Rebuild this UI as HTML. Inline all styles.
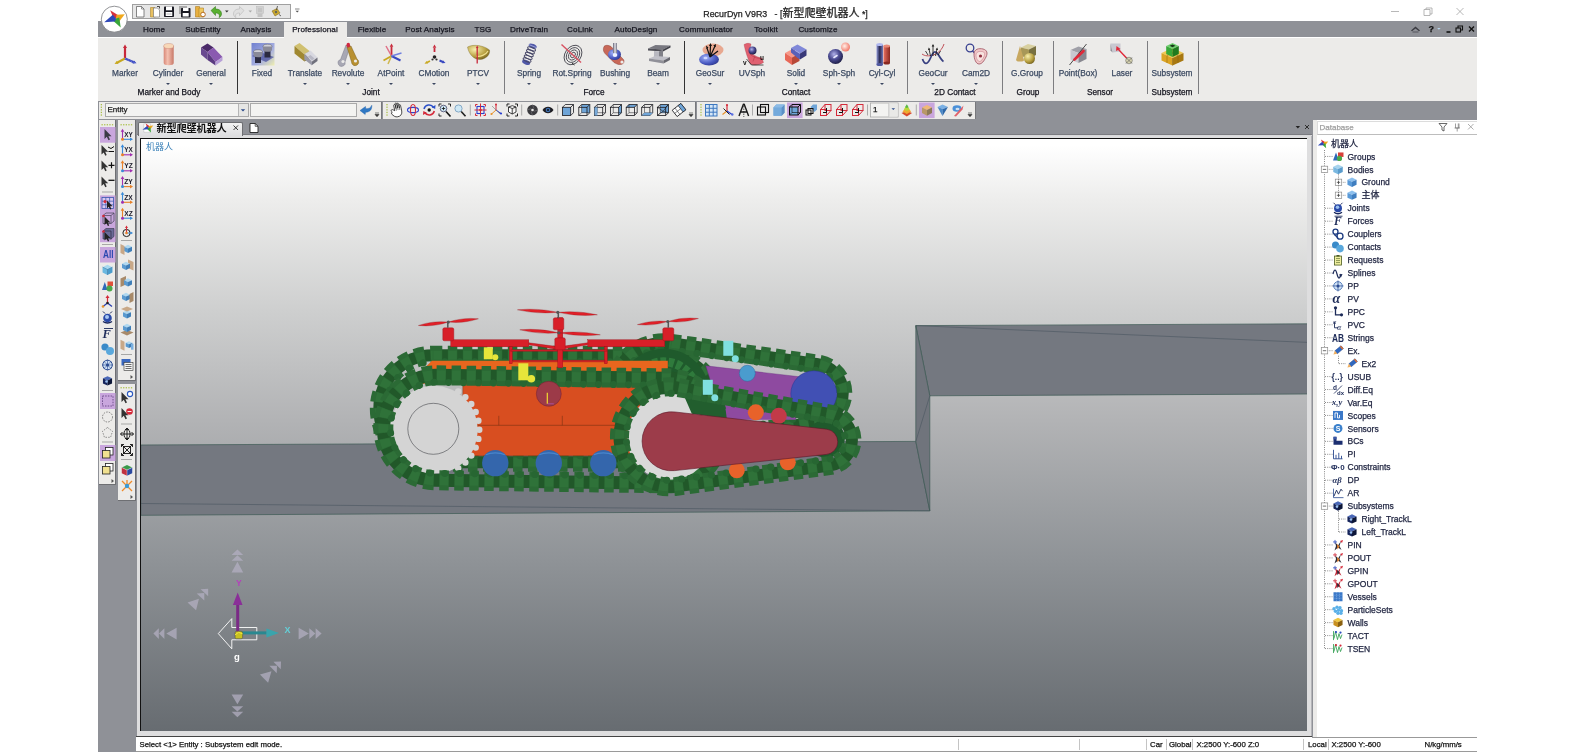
<!DOCTYPE html><html><head><meta charset="utf-8"><title>RecurDyn V9R3</title><style>
*{box-sizing:border-box;margin:0;padding:0}
html,body{width:1575px;height:756px;overflow:hidden;background:#fff}
body{position:relative;font-family:"Liberation Sans","Noto Sans CJK SC",sans-serif;font-size:8.5px;color:#1a1a2a}
.abs{position:absolute}
.t,.mtab,.rl,.gl,.tr,.sb{-webkit-text-stroke:.25px currentColor}
.t{position:absolute;white-space:nowrap;line-height:1}
.c{transform:translateX(-50%)}
#menubar{left:98px;top:21.3px;width:1379px;height:16.2px;background:#8f9197}
#ribbon{left:98px;top:37.5px;width:1379px;height:63.5px;background:#ecebe9}
#tbar{left:98px;top:101px;width:1379px;height:18px;background:#8f9197}
#work{left:98px;top:119px;width:1379px;height:619px;background:#8f9197}
.mtab{position:absolute;top:26.3px;font-size:8.1px;color:#15151f;white-space:nowrap;line-height:1;transform:translateX(-50%);letter-spacing:.1px}
.rl{position:absolute;top:69.4px;font-size:8.3px;color:#3c4a62;white-space:nowrap;line-height:1;transform:translateX(-50%)}
.gl{position:absolute;top:88.6px;font-size:8.25px;color:#15151f;white-space:nowrap;line-height:1;transform:translateX(-50%)}
.sep{position:absolute;top:41px;height:53px;width:1px;background:#7d7d80}
.dd{position:absolute;top:83px;width:0;height:0;border-left:2px solid transparent;border-right:2px solid transparent;border-top:2px solid #3a4660;transform:translateX(-50%)}
.tr{position:absolute;font-size:8.5px;color:#1f2440;white-space:nowrap;line-height:1}
.sb{position:absolute;top:740.8px;font-size:7.8px;color:#111;white-space:nowrap;line-height:1}
</style></head><body><div id="root" style="position:absolute;left:0;top:0;width:1575px;height:756px;will-change:transform">
<div class="t" style="left:703.3px;top:7.8px;font-size:8.85px;color:#222">RecurDyn V9R3&nbsp;&nbsp; - [<span style="font-size:11px">新型爬壁机器人</span> *]</div>
<svg class="abs" style="left:1385px;top:4px" width="90" height="16" viewBox="0 0 90 16"><g stroke="#9a9a9a" fill="none" stroke-width="0.7"><path d="M6 7.5h8"/><path d="M39 5.5h6v6h-6z M41 5.5v-1.5h6v6h-2"/><path d="M71.500 4l7 7M78.500 4l-7 7"/></g></svg>
<div id="menubar" class="abs"></div>
<div class="abs" style="left:283.5px;top:22.3px;width:63px;height:15.4px;background:#ecebe9"></div>
<div class="mtab" style="left:154px">Home</div>
<div class="mtab" style="left:203px">SubEntity</div>
<div class="mtab" style="left:256px">Analysis</div>
<div class="mtab" style="left:315px">Professional</div>
<div class="mtab" style="left:372px">Flexible</div>
<div class="mtab" style="left:430px">Post Analysis</div>
<div class="mtab" style="left:483px">TSG</div>
<div class="mtab" style="left:529px">DriveTrain</div>
<div class="mtab" style="left:580px">CoLink</div>
<div class="mtab" style="left:636px">AutoDesign</div>
<div class="mtab" style="left:706px">Communicator</div>
<div class="mtab" style="left:766px">Toolkit</div>
<div class="mtab" style="left:818px">Customize</div>
<div id="ribbon" class="abs"></div>
<div class="rl" style="left:125px">Marker</div>
<div class="rl" style="left:168px">Cylinder</div>
<div class="dd" style="left:168px"></div>
<div class="rl" style="left:211px">General</div>
<div class="dd" style="left:211px"></div>
<div class="rl" style="left:262px">Fixed</div>
<div class="rl" style="left:305px">Translate</div>
<div class="dd" style="left:305px"></div>
<div class="rl" style="left:348px">Revolute</div>
<div class="dd" style="left:348px"></div>
<div class="rl" style="left:391px">AtPoint</div>
<div class="dd" style="left:391px"></div>
<div class="rl" style="left:434px">CMotion</div>
<div class="dd" style="left:434px"></div>
<div class="rl" style="left:478px">PTCV</div>
<div class="dd" style="left:478px"></div>
<div class="rl" style="left:529px">Spring</div>
<div class="dd" style="left:529px"></div>
<div class="rl" style="left:572px">Rot.Spring</div>
<div class="dd" style="left:572px"></div>
<div class="rl" style="left:615px">Bushing</div>
<div class="dd" style="left:615px"></div>
<div class="rl" style="left:658px">Beam</div>
<div class="dd" style="left:658px"></div>
<div class="rl" style="left:710px">GeoSur</div>
<div class="dd" style="left:710px"></div>
<div class="rl" style="left:752px">UVSph</div>
<div class="rl" style="left:796px">Solid</div>
<div class="dd" style="left:796px"></div>
<div class="rl" style="left:839px">Sph-Sph</div>
<div class="dd" style="left:839px"></div>
<div class="rl" style="left:882px">Cyl-Cyl</div>
<div class="dd" style="left:882px"></div>
<div class="rl" style="left:933px">GeoCur</div>
<div class="dd" style="left:933px"></div>
<div class="rl" style="left:976px">Cam2D</div>
<div class="dd" style="left:976px"></div>
<div class="rl" style="left:1027px">G.Group</div>
<div class="rl" style="left:1078px">Point(Box)</div>
<div class="rl" style="left:1122px">Laser</div>
<div class="rl" style="left:1172px">Subsystem</div>
<div class="gl" style="left:169px">Marker and Body</div>
<div class="gl" style="left:371px">Joint</div>
<div class="gl" style="left:594px">Force</div>
<div class="gl" style="left:796px">Contact</div>
<div class="gl" style="left:955px">2D Contact</div>
<div class="gl" style="left:1028px">Group</div>
<div class="gl" style="left:1100px">Sensor</div>
<div class="gl" style="left:1172px">Subsystem</div>
<div class="sep" style="left:237px;background:#333;width:1.3px"></div>
<div class="sep" style="left:504px"></div>
<div class="sep" style="left:684px;background:#333;width:1.3px"></div>
<div class="sep" style="left:907px"></div>
<div class="sep" style="left:1002px"></div>
<div class="sep" style="left:1053px"></div>
<div class="sep" style="left:1147px"></div>
<div class="sep" style="left:1198px"></div>
<svg class="abs" style="left:98px;top:38px" width="1120" height="32" viewBox="98 38 1120 32">
<defs><linearGradient id="gcyl" x1="0" x2="1"><stop offset="0" stop-color="#d88878"/><stop offset=".4" stop-color="#f4c0b0"/><stop offset="1" stop-color="#c87868"/></linearGradient><linearGradient id="gfix" x1="0" y1="0" x2="1" y2="1"><stop offset="0" stop-color="#7080d0"/><stop offset=".6" stop-color="#a8b0e0"/><stop offset="1" stop-color="#f0f0b0"/></linearGradient><radialGradient id="gsph" cx=".4" cy=".35" r=".7"><stop offset="0" stop-color="#b0b0e8"/><stop offset=".5" stop-color="#4a4a90"/><stop offset="1" stop-color="#1a1a40"/></radialGradient><radialGradient id="gblue" cx=".35" cy=".35" r=".8"><stop offset="0" stop-color="#a0b0f8"/><stop offset=".6" stop-color="#4858c0"/><stop offset="1" stop-color="#283080"/></radialGradient><radialGradient id="gpink" cx=".4" cy=".4" r=".7"><stop offset="0" stop-color="#fff0e8"/><stop offset="1" stop-color="#f06858"/></radialGradient><radialGradient id="ggold" cx=".35" cy=".3" r=".8"><stop offset="0" stop-color="#f8f0b0"/><stop offset=".6" stop-color="#b8a040"/><stop offset="1" stop-color="#6a5818"/></radialGradient><linearGradient id="gsteel" x1="0" x2="1"><stop offset="0" stop-color="#606070"/><stop offset=".5" stop-color="#e0e0e8"/><stop offset="1" stop-color="#707080"/></linearGradient><linearGradient id="gredc" x1="0" x2="1"><stop offset="0" stop-color="#e87060"/><stop offset="1" stop-color="#8a2820"/></linearGradient><linearGradient id="gbluc" x1="0" x2="1"><stop offset="0" stop-color="#9098d8"/><stop offset=".5" stop-color="#282850"/><stop offset="1" stop-color="#7078b8"/></linearGradient></defs>
<path d="M125 58.500V47" stroke="#c8283a" stroke-width="2.200"/><path d="M125 44.500l-2 3.500h4z" fill="#c8283a"/>
<path d="M125 58.500L116.500 63" stroke="#c8a820" stroke-width="2"/><path d="M114.500 64l4-.3-1.800-2.800z" fill="#c8a820"/>
<path d="M125 58.500L134.500 62.500" stroke="#3848c0" stroke-width="2.200"/><path d="M136.500 63.300l-4 .2 1.500-3z" fill="#3848c0"/><path d="M125 58.500L134.500 62.500" stroke="#9aa4f0" stroke-width=".6" stroke-dasharray="1.500 1.500"/>
<path d="M163.700 46v17a5 2.200 0 0 0 10 0v-17z" fill="url(#gcyl)"/><ellipse cx="168.700" cy="46" rx="5" ry="2.500" fill="#f8d8b8" stroke="#c08070" stroke-width=".4"/>
<path d="M201 47.500l6.500-4 6 4-6 4.500z" fill="#4a2a68"/><path d="M201 47.500l6.500 4.500v8l-6.500-5.500z" fill="#6a4a90"/><path d="M207.500 52l6-4.500 9 9.500-7 5z" fill="#8a5ab0"/><path d="M207.500 52v8l8 5.500 0-3.500z" fill="#5a3a80"/><path d="M215.500 62l7-5v3.500l-7 5z" fill="#b8a0d8"/>
<rect x="251.500" y="43" width="23" height="22.500" fill="url(#gfix)"/>
<path d="M252 56l8-4 14 5-8 5z" fill="#5058a0" opacity=".8"/>
<rect x="255" y="54" width="6" height="9" fill="#2a2a40"/><ellipse cx="258" cy="52" rx="4.500" ry="2.300" fill="#d0d0d8" stroke="#444" stroke-width=".4"/><path d="M253.5 52v3a4.500 2.300 0 0 0 9 0v-3" fill="#8a8a98"/>
<rect x="264.5" y="48.5" width="6" height="9" fill="#2a2a40"/><ellipse cx="267.5" cy="46.5" rx="4.500" ry="2.300" fill="#d0d0d8" stroke="#444" stroke-width=".4"/><path d="M263 46.5v3a4.500 2.300 0 0 0 9 0v-3" fill="#8a8a98"/>
<path d="M294.500 46l5-3 10 8-5 3.500z" fill="#d0c070"/><path d="M294.500 46l10 8.500v7l-10-8z" fill="#a08830"/><path d="M304.500 54.500l5-3.500v7l-5 3.500z" fill="#786420"/>
<path d="M304.500 54l6-3.500 7 7-5.500 4z" fill="#d8d8e0"/><path d="M304.500 54l7.500 7.500v4l-7.500-6z" fill="#9a9aa8"/><path d="M312 61.500l5.500-4v3.500l-5.500 4z" fill="#70707c"/><path d="M308 56.500l4 4 2.500-2-4-3.500z" fill="#b8b8c4"/>
<path d="M346 45l4 1.500-5 15.500a3.500 3.500 0 1 1-4.500-2.500z" fill="#a8a8b4" stroke="#66667a" stroke-width=".4"/><circle cx="343" cy="61.500" r="1.600" fill="#ecebe9"/>
<path d="M347 47l4-1 6 13a3.600 3.600 0 1 1-5.500 3z" fill="#b89030" stroke="#6a5010" stroke-width=".4"/><circle cx="355.500" cy="61" r="1.600" fill="#ecebe9"/>
<ellipse cx="348.300" cy="45.200" rx="1.800" ry="2.400" fill="#d02840"/>
<path d="M391.500 56v-9.500" stroke="#c8283a" stroke-width="1.800"/><path d="M391.500 43.500l-1.800 3.300h3.600z" fill="#c8283a"/>
<path d="M391.500 56l-5.500-10" stroke="#e07088" stroke-width="1.500"/>
<path d="M391.500 56l-8 4.500" stroke="#c8a820" stroke-width="1.800"/><path d="M391.500 56l-3.500 8" stroke="#d0b850" stroke-width="1.500"/>
<path d="M391.500 56l9 4.500" stroke="#3848c0" stroke-width="2"/><path d="M391.500 56l10-3" stroke="#7080e0" stroke-width="1.400"/>
<path d="M434.500 52v-4" stroke="#c8283a" stroke-width="1.800"/><path d="M434.500 44.500l-1.800 3.300h3.600z" fill="#c8283a"/>
<circle cx="434.500" cy="57" r="1.800" fill="#222"/><circle cx="432.500" cy="59.500" r="1.100" fill="#333"/><circle cx="436.500" cy="59.500" r="1.100" fill="#333"/>
<path d="M430 61l-3 1.500" stroke="#c8a820" stroke-width="1.800"/><path d="M424.500 63.800l3.600-.2-1.500-2.600z" fill="#c8a820"/>
<path d="M439.500 60.500l3.500 1.500" stroke="#3848c0" stroke-width="2"/><path d="M445.500 63l-3.600.2 1.300-2.800z" fill="#3848c0"/>
<path d="M467.500 47c5-3 16-2 22 3 1 5-4 9-9 9.500-7 .5-12-6-13-12.500z" fill="url(#ggold)" stroke="#6a5818" stroke-width=".3"/><path d="M476 56c4 1 10-1 12-5" fill="none" stroke="#f0e090" stroke-width="1.200"/>
<path d="M477.200 47.500V63.500" stroke="#c8283a" stroke-width="1.300"/><path d="M477.200 45.500l-1.300 2.600h2.600z" fill="#c8283a"/>
<g transform="rotate(22 529.500 54)"><ellipse cx="529.500" cy="45.500" rx="4.200" ry="2.200" fill="#5058a8"/><ellipse cx="529.500" cy="63" rx="4.200" ry="2.200" fill="#5058a8"/>
<ellipse cx="529.500" cy="48.5" rx="4.200" ry="1.500" fill="none" stroke="#484868" stroke-width="1"/>
<ellipse cx="529.500" cy="51.5" rx="4.200" ry="1.500" fill="none" stroke="#484868" stroke-width="1"/>
<ellipse cx="529.500" cy="54.5" rx="4.200" ry="1.500" fill="none" stroke="#484868" stroke-width="1"/>
<ellipse cx="529.500" cy="57.5" rx="4.200" ry="1.500" fill="none" stroke="#484868" stroke-width="1"/>
<ellipse cx="529.500" cy="60.5" rx="4.200" ry="1.500" fill="none" stroke="#484868" stroke-width="1"/>
<path d="M525.500 45.500h8" stroke="#c0c8f0" stroke-width=".6"/></g>
<g fill="none" stroke="#3a3a44" stroke-width=".8" transform="rotate(35 573 55)">
<ellipse cx="573" cy="55" rx="2" ry="3"/>
<ellipse cx="573" cy="55" rx="4" ry="5.5"/>
<ellipse cx="573" cy="55" rx="6" ry="8"/>
<ellipse cx="573" cy="55" rx="8" ry="10.5"/>
</g><path d="M561.500 44.500L581 62.500" stroke="#d85060" stroke-width="1.400"/><path d="M572 63l2.500 2" stroke="#333" stroke-width="1"/>
<path d="M604 46.500c2-2 5-1 7 0l12 12.500c2 2 1 5-2 5.500-3 .5-5-1-7-2l-9-9c-2-2-2-5-1-7z" fill="#c86858" stroke="#7a3028" stroke-width=".4"/>
<ellipse cx="614.500" cy="54.500" rx="6.500" ry="5.500" fill="url(#gblue)"/><ellipse cx="615" cy="55" rx="2.300" ry="2" fill="#f0f4ff"/>
<rect x="613" y="43" width="4" height="10" fill="url(#gsteel)"/><circle cx="622" cy="62" r="1.600" fill="#ecebe9"/>
<path d="M648 48.500l7.500-3.500 15 .5-7.500 4z" fill="#787880"/><path d="M648 48.500l15 1v2l-15-1z" fill="#505058"/><path d="M663 49.500l7.500-4v2l-7.500 4z" fill="#404048"/>
<path d="M654 51v8l5 .5v-8z" fill="#b8b8c0"/><path d="M659 51.500l4-2v8l-4 2z" fill="#808088"/>
<path d="M649 58.500l6-2.500 15 1-6.500 3.500z" fill="#c0c0c8"/><path d="M649 58.500l14.500 2v3l-14.500-2.500z" fill="#909098"/><path d="M663.500 60.500l6.500-3.500v3l-6.500 3.500z" fill="#686870"/>
<ellipse cx="713" cy="50" rx="10.500" ry="6.500" fill="#e8a890"/><ellipse cx="709" cy="59.500" rx="10" ry="6" fill="url(#gblue)"/><ellipse cx="705.500" cy="58" rx="2" ry="1.200" fill="#d0d8ff"/>
<g stroke="#111" stroke-width="1.200" fill="none"><path d="M710 57l-3-9M710 57l.5-12M710 57l5-11M710 57l8-6"/></g><path d="M706 45.500l2.500 2-2 1.500zM710.500 43l1.500 3h-3zM716 44l-.3 3.300-2.500-1.800z" fill="#111"/>
<path d="M744 44.500c3-1.500 5-1.500 7-.5l-1 5c2 6 6 8 12 9l1.500 4.500c-5 3-10 3-13 1.500-3-6-5-12-6.500-19.500z" fill="#e06070" stroke="#a02838" stroke-width=".3"/><path d="M750 54c3 3 6 4 10 4.500M753 61.500l2-6" stroke="#a02838" stroke-width=".4" fill="none"/>
<circle cx="752.500" cy="50.500" r="4" fill="url(#gsph)"/>
<text x="743" y="64.500" font-size="6.500" font-weight="bold" fill="#111" font-family="Liberation Sans,sans-serif">v</text><text x="760" y="60" font-size="6.500" font-weight="bold" fill="#111" font-family="Liberation Sans,sans-serif">u</text><path d="M746.500 59l5 6h12" stroke="#111" stroke-width=".7" fill="none"/>
<path d="M785 53l7.500-4 7 4.500-7.500 4z" fill="#f89888"/><path d="M785 53l7 4.500v7.500l-7-5z" fill="#e86858"/><path d="M792 57.500l7.500-4v7.500l-7.500 4z" fill="#b84838"/>
<path d="M791 48l6.500-3.500 9 5-6.500 4z" fill="#8088d8"/><path d="M800 53.500l6.500-4v6l-6.500 4z" fill="#383878"/><path d="M791 48l9 5.500v6l-3-2-6-5z" fill="#5860b8"/><path d="M795 50.500l5 3" stroke="#c0c8ff" stroke-width=".5"/>
<circle cx="835.500" cy="56.500" r="7.500" fill="url(#gsph)"/><circle cx="845.500" cy="47" r="4.500" fill="url(#gpink)"/><path d="M834 57.500l3-2" stroke="#e8e8ff" stroke-width="1.600" stroke-linecap="round"/>
<rect x="883.500" y="46" width="6.500" height="17" fill="url(#gredc)"/><ellipse cx="886.700" cy="46" rx="3.250" ry="1.500" fill="#e88878"/><ellipse cx="886.700" cy="63" rx="3.250" ry="1.500" fill="#8a2820"/>
<rect x="876.500" y="44.500" width="6.500" height="20" fill="url(#gbluc)"/><ellipse cx="879.700" cy="44.500" rx="3.250" ry="1.500" fill="#b0b8f0"/><ellipse cx="879.700" cy="64.500" rx="3.250" ry="1.500" fill="#5058a0"/>
<path d="M922 54c5 4 18 2 22-10" fill="none" stroke="#c05058" stroke-width="1"/><path d="M922.500 59c2 6 5 6 8-1s5-8 8-3 4 6 5 6.500" fill="none" stroke="#384080" stroke-width="1.800"/>
<g stroke="#111" stroke-width=".8"><path d="M933 56v-10M930.500 56l-1.500-7M935.500 56l1.500-7M928 55l-2.500-4M938 55l2.500-4"/></g><path d="M933 44l1.300 2.500h-2.600zM928.800 47.500l1.500 2-2.300.5zM937.200 47.500l.8 2.500-2.300-.5z" fill="#111"/>
<circle cx="970" cy="48" r="3.800" fill="none" stroke="#384090" stroke-width="1.300"/><path d="M972.500 51l4 4" stroke="#384090" stroke-width="1.300"/>
<path d="M974 54c0-5 5-6 9-5 4 1 5 4 3 8s-4 7-7 7-5-5-5-10z" fill="#f0c8c8" stroke="#a05060" stroke-width=".8"/><path d="M976 55c0-3 3-4 6-3.500s3 2.500 2 5-3 5-4.500 5-3.500-3-3.500-6.500z" fill="#f8e4e0" stroke="#c07080" stroke-width=".5"/><circle cx="980.500" cy="56" r="1.600" fill="#903040"/>
<path d="M1021 47.500l7-3.500 8 2-7 3.500z" fill="#d8d0a0"/><path d="M1021 47.500l8 2v9l-8-2.500z" fill="#a89858"/><path d="M1029 49.500l7-3.500v9l-7 3.500z" fill="#787040"/>
<path d="M1016 60l4-14 4 14a4 1.500 0 0 1-8 0z" fill="#c8a860"/><circle cx="1029.500" cy="58.500" r="5.500" fill="url(#ggold)"/>
<path d="M1070.500 50l8-3.500 8 2.500-8 4z" fill="#a0a0a8"/><path d="M1070.500 50l8 3v10l-8-3.500z" fill="#c8c8d0"/><path d="M1078.500 53l8-4v10l-8 4z" fill="#888890"/>
<path d="M1069.500 65l17-21" stroke="#222" stroke-width=".8"/><path d="M1074.500 59.500l9-8.500" stroke="#e02838" stroke-width="2.600" stroke-linecap="round"/>
<path d="M1110.500 43.500h10v8l-8 1z" fill="#c8c8d0"/><path d="M1110.500 43.500l2 9-2-2z" fill="#909098"/><path d="M1116.500 46l-0.500 5 4.500-2z" fill="#e02838"/><path d="M1118 49l9 9.500" stroke="#e02838" stroke-width="1.400"/>
<circle cx="1129" cy="60.500" r="3.300" fill="#d8d4b0" stroke="#555" stroke-width=".5"/><path d="M1126 57.500l6 6M1132 57.500l-6 6" stroke="#555" stroke-width=".6"/>
<path d="M1172.500 48L1183.500 53L1172.500 58L1161.500 53z" fill="#f0c850"/><path d="M1161.500 53L1172.500 58V65.500L1161.500 60.500z" fill="#dca424"/><path d="M1183.500 53L1172.500 58V65.500L1183.500 60.500z" fill="#a87810"/>
<path d="M1167 50.500L1178 55.500M1178 50.500L1167 55.500M1167 55.500V63M1178 55.500V63M1172.500 58V65.500" stroke="#8a6008" stroke-width=".5" fill="none"/>
<path d="M1172.500 43L1178.800 46L1172.500 49L1166.200 46z" fill="#70d070"/><path d="M1166.200 46L1172.500 49V57L1166.200 54z" fill="#38a838"/><path d="M1178.800 46L1172.500 49V57L1178.800 54z" fill="#1f7a1f"/>
<path d="M1169.500 45.800l3 1.400 3-1.400-3-1.400z" fill="#183818"/>
</svg>
<div class="abs" style="left:132.300px;top:4.200px;width:158.300px;height:14.800px;background:#e6e6e6;border:1px solid #a0a0a0"></div>
<svg class="abs" style="left:98px;top:0" width="210" height="36" viewBox="98 0 210 36">
<circle cx="114.300" cy="19.200" r="13" fill="#fff" stroke="#77787c" stroke-width=".8"/>
<path d="M110.200 10.200L118.200 15.300L116 18.500L112.800 16.500z" fill="#d8313a"/><path d="M124.800 14.300L119 21.800L116 18.500L116.500 14.800z" fill="#f0a81c"/><path d="M120.700 27.600L112.500 20.200L116 18.500L119.300 17.500z" fill="#3aa63a"/><path d="M104.200 22.200L112.800 14.800L116 18.500L115 21.500z" fill="#2f48b8"/>
<path d="M136.500 6.500h5l2.500 2.500v8h-7.500z" fill="#fff" stroke="#555" stroke-width=".7"/><path d="M141.500 6.500v2.500h2.500" fill="none" stroke="#555" stroke-width=".6"/>
<path d="M150.500 7.500h4l1 1v8.500h-5z" fill="#e8c060" stroke="#a07818" stroke-width=".5"/><path d="M153.500 8h4l2 2v7h-6z" fill="#fff" stroke="#666" stroke-width=".6"/><path d="M157 6.500h2.500v2" stroke="#222" stroke-width=".8" fill="none"/>
<rect x="164" y="6.500" width="10" height="10.500" rx=".8" fill="#1a1a22"/><rect x="166" y="6.500" width="6" height="3.800" fill="#fff"/><rect x="165.700" y="12" width="6.600" height="4" fill="#fff"/><path d="M166.500 14h5" stroke="#888" stroke-width=".6"/>
<rect x="179" y="6" width="8" height="8" fill="#aaa"/><rect x="181" y="8" width="9.500" height="9.500" rx=".8" fill="#1a1a22"/><rect x="183" y="8" width="5.500" height="3" fill="#fff"/><rect x="182.700" y="13" width="6" height="3.500" fill="#fff"/>
<path d="M195.500 6.500h4v10.500h-4z" fill="#e8b040" stroke="#a07010" stroke-width=".5"/><path d="M199 8h4.500v9h-4.500z" fill="#f0c860" stroke="#a07010" stroke-width=".5"/><circle cx="203" cy="14.500" r="2.300" fill="#fff" stroke="#b06010" stroke-width=".9"/>
<path d="M211 10.500l4.500-4v2.500c4 0 6 2 6 5 0 1.500-1 3-2.500 3.500 1-2 .5-4.500-3.500-4.500v2.500z" fill="#58b030" stroke="#2a7010" stroke-width=".5"/>
<path d="M225 10.500h3.600l-1.800 2z" fill="#333"/>
<path d="M244 10.500l-4.500-4v2.500c-4 0-6 2-6 5 0 1.500 1 3 2.500 3.500-1-2-.5-4.500 3.500-4.500v2.500z" fill="#e0e0e0" stroke="#b8b8b8" stroke-width=".6"/>
<path d="M248.500 10.500h3.600l-1.800 2z" fill="#aaa"/>
<rect x="256.500" y="6.500" width="7" height="7" fill="#d0d0d0" stroke="#bbb" stroke-width=".5"/><path d="M257.500 13.500h5v3.500h-5z" fill="#c4c4c4"/><path d="M258 9h4M258 11h4" stroke="#aaa" stroke-width=".6"/>
<path d="M272 11l5-2.500 3 4.500-5 3z" fill="#c8a830" stroke="#806010" stroke-width=".5"/><path d="M277.500 6l-1 4M279 14.500l2 1.500" stroke="#444" stroke-width=".8"/><circle cx="276" cy="12" r="1.200" fill="#665"/>
<path d="M295 9h4.500" stroke="#555" stroke-width=".7"/><path d="M295.500 10.800h3.500l-1.750 1.700z" fill="#555"/>
</svg>
<svg class="abs" style="left:1405px;top:22px" width="72" height="15" viewBox="1405 22 72 15">
<path d="M1411 30.500l4.500-4 4.500 4-1 .8-3.500-2.800-3.500 2.800z" fill="#3a3a40"/><path d="M1412.500 31.500h6v1h-6z" fill="#55555c"/>
<path d="M1437.200 28h3.400l-1.700 1.800z" fill="#b8d8f0"/>
<path d="M1446.500 32h4" stroke="#111" stroke-width="1.600"/>
<g fill="none" stroke="#111" stroke-width="1.100"><rect x="1456" y="28" width="4.500" height="4"/><path d="M1458 28v-2h4.500v4h-2"/></g>
<path d="M1469 26.500l5 5M1474 26.500l-5 5" stroke="#111" stroke-width="1.400"/>
</svg>
<div class="t" style="left:1428.500px;top:24.500px;font-size:9px;font-weight:bold;color:#111">?</div>
<div id="tbar" class="abs"></div>
<div class="abs" style="left:98.5px;top:101.5px;width:283.5px;height:17.3px;background:#ecebe9;border-right:1px solid #77787c"></div>
<div class="abs" style="left:383.3px;top:101.5px;width:312.5px;height:17.3px;background:#ecebe9;border-right:1px solid #77787c"></div>
<div class="abs" style="left:697.0px;top:101.5px;width:278.8px;height:17.3px;background:#ecebe9;border-right:1px solid #77787c"></div>
<div class="abs" style="left:98px;top:100.6px;width:1379px;height:1px;background:#8f9197"></div>
<div class="abs" style="left:104.5px;top:102.8px;width:144px;height:14px;background:#f3f3f1;border:1px solid #a9a9a9"></div>
<div class="abs" style="left:238px;top:103.5px;width:10px;height:12.6px;background:#e6e6e4;border-left:1px solid #b5b5b5"></div>
<div class="t" style="left:107.5px;top:105.5px;font-size:8px;color:#1a1a1a">Entity</div>
<div class="abs" style="left:249.5px;top:102.8px;width:107px;height:14px;background:#f3f3f1;border:1px solid #a9a9a9"></div>
<svg class="abs" style="left:98px;top:101px" width="1379" height="18" viewBox="98 101 1379 18">
<path d="M101.3 104v12" stroke="#9ab520" stroke-width="1" stroke-dasharray="1.3 1.3" fill="none"/>
<path d="M240.8 109.3h4.4l-2.2 2.2z" fill="#2b4a8a"/>
<path d="M360 110.5l5.5-4 .3 2.2c3 .2 5-1 6-3.500 .3 4.500-2 7-6.300 7l-.3 2.300z" fill="#2f78c4" stroke="#1d5ea8" stroke-width=".4"/>
<path d="M375 113h4M375 114.5h4l-2 2.2z" stroke="#333" stroke-width="0.6" fill="#333"/>
<path d="M387 104v12" stroke="#9ab520" stroke-width="1" stroke-dasharray="1.3 1.3" fill="none"/>
<g transform="rotate(-12 397 110)"><path d="M391.800 110.800c-1.400-1.500-.2-3 1.400-1.800l1.500 1.300v-5.300c0-1.200 1.700-1.200 1.700 0v3.500-4.700c0-1.200 1.700-1.200 1.700 0v4.500-3.900c0-1.200 1.700-1.200 1.700 0v4.200-2.500c0-1.100 1.600-1.100 1.600 0v5.900c0 3.200-2.200 4.800-5 4.800s-3.900-1.700-5.600-4.200z" fill="#fff" stroke="#222" stroke-width=".75" stroke-linejoin="round"/><path d="M396.400 108.500v2M398.100 108.300v2M399.800 108.600v2" stroke="#222" stroke-width=".5"/></g>
<g fill="none" stroke-width="1.100"><ellipse cx="413" cy="110" rx="5.500" ry="2.600" stroke="#2a3fd0"/><ellipse cx="413" cy="110" rx="2.500" ry="5.500" stroke="#d42a3a"/></g>
<g fill="none" stroke-width="1.500"><path d="M424 109a5.200 5.200 0 0 1 9.500-1.500" stroke="#2a4fc8"/><path d="M434.300 111a5.200 5.200 0 0 1 -9.500 1.500" stroke="#d42a3a"/></g><path d="M435.500 105l-.3 4-3.500-1.800z" fill="#2a4fc8"/><path d="M423 115l.3-4 3.500 1.800z" fill="#d42a3a"/><circle cx="429.200" cy="110" r="1.700" fill="#111"/>
<g fill="none" stroke="#111" stroke-width=".9"><path d="M439 106.500v-2.500h2.500M448 104h2.500v2.500M439 113.500v2.500h2.500"/></g><circle cx="443.500" cy="108.500" r="3.300" fill="#cfe8f5" stroke="#446" stroke-width=".8"/><path d="M446 111.500l4.500 5" stroke="#111" stroke-width="1.600"/><path d="M443.500 106.800v3.400M441.800 108.500h3.400" stroke="#111" stroke-width=".8"/>
<circle cx="458.500" cy="108.500" r="3.600" fill="#cfe8f5" stroke="#7aa0c0" stroke-width=".9"/><path d="M461.200 111.500l4.300 4.700" stroke="#222" stroke-width="1.600"/>
<path d="M470.3 104.5v11" stroke="#9a9a9a" stroke-width="0.8"/>
<g fill="none" stroke="#d42a3a" stroke-width="1"><path d="M475.500 106.500v-2h2M483.500 104.500h2v2M475.500 113.500v2h2M485.500 113.500v2h-2"/></g><rect x="477" y="106.500" width="7" height="7" fill="none" stroke="#2a3fd0" stroke-width="1.100"/><path d="M480.500 103.500v13M474.500 110h12" stroke="#d42a3a" stroke-width="1"/><circle cx="480.500" cy="110" r="1.300" fill="#d42a3a"/>
<g stroke-width="1"><path d="M496 110v-5.500" stroke="#d42a3a"/><path d="M496 110l-4.500 4" stroke="#e8922a"/><path d="M496 110l5 3.500" stroke="#2a3fd0"/><path d="M492 106l8 8" stroke="#777" stroke-width=".6"/></g><circle cx="496" cy="104.500" r="1" fill="#d42a3a"/><circle cx="491.500" cy="114" r="1.100" fill="#e8922a"/><circle cx="501" cy="113.500" r="1.100" fill="#2a3fd0"/>
<g fill="none" stroke="#111" stroke-width=".9"><path d="M507 106.500v-2.500h2.500M515 104h2.500v2.500M507 113.500v2.500h2.500M517.500 113.500v2.500h-2.500"/><path d="M508.500 107l3.700 1.500 3.800-1.500-3.700-1.300zM508.500 107v5l3.700 2v-5.500M516 107v5l-3.800 2" stroke-width=".8" fill="#fff"/></g>
<path d="M521.7 104.5v11" stroke="#9a9a9a" stroke-width="0.8"/>
<circle cx="532.500" cy="110" r="5.300" fill="#3b3b3f"/><circle cx="532.500" cy="110" r="1.300" fill="#e8e8e8"/><g stroke="#77777c" stroke-width=".6"><path d="M532.500 104.700l1.500 4M537.800 110l-4 1.400M532.500 115.300l-1.500-4M527.200 110l4-1.400"/></g>
<path d="M542.500 110c3-4.300 8-4.300 11 0-3 4.300-8 4.300-11 0z" fill="#1d1d22"/><circle cx="548" cy="110" r="2.300" fill="#3d6fb0"/><circle cx="548" cy="110" r="1" fill="#111"/>
<path d="M557.7 104.5v11" stroke="#9a9a9a" stroke-width="0.8"/>
<rect x="562.5" y="107.3" width="8.2" height="8.2" fill="#6fa5d8"/>
<g fill="none" stroke="#1b1b20" stroke-width=".8"><rect x="562.5" y="107.3" width="8.2" height="8.2"/><path d="M562.5 107.3l2.8 -2.8h8.2v8.2l-2.8 2.8M570.7 107.3l2.8 -2.8"/>
</g>
<rect x="581.6" y="104.7" width="8.2" height="8.2" fill="#6fa5d8"/>
<g fill="none" stroke="#1b1b20" stroke-width=".8"><rect x="578.8" y="107.3" width="8.2" height="8.2"/><path d="M578.8 107.3l2.8 -2.8h8.2v8.2l-2.8 2.8M587 107.3l2.8 -2.8"/>
<path d="M581.6 104.5v8.2h8.2M581.6 112.7l-2.8 2.8" stroke-width=".5"/>
</g>
<g fill="none" stroke="#1b1b20" stroke-width=".8"><rect x="594.5" y="107.3" width="8.2" height="8.2"/><path d="M594.5 107.3l2.8 -2.8h8.2v8.2l-2.8 2.8M602.7 107.3l2.8 -2.8"/>
<path d="M597.3 104.5v8.2h8.2M597.3 112.7l-2.8 2.8" stroke-width=".5"/>
</g>
<rect x="594.500" y="107.300" width="3" height="8.200" fill="#6fa5d8" opacity=".9"/>
<path d="M618.7 107.3l2.8 -2.8v8.2l-2.8 2.8z" fill="#6fa5d8"/>
<g fill="none" stroke="#1b1b20" stroke-width=".8"><rect x="610.5" y="107.3" width="8.2" height="8.2"/><path d="M610.5 107.3l2.8 -2.8h8.2v8.2l-2.8 2.8M618.7 107.3l2.8 -2.8"/>
<path d="M613.3 104.5v8.2h8.2M613.3 112.7l-2.8 2.8" stroke-width=".5"/>
</g>
<path d="M626.2 107.3l2.8 -2.8h8.2l-2.8 2.8z" fill="#6fa5d8"/>
<g fill="none" stroke="#1b1b20" stroke-width=".8"><rect x="626.2" y="107.3" width="8.2" height="8.2"/><path d="M626.2 107.3l2.8 -2.8h8.2v8.2l-2.8 2.8M634.4 107.3l2.8 -2.8"/>
<path d="M629 104.5v8.2h8.2M629 112.7l-2.8 2.8" stroke-width=".5"/>
</g>
<g fill="none" stroke="#1b1b20" stroke-width=".8"><rect x="641.7" y="107.3" width="8.2" height="8.2"/><path d="M641.7 107.3l2.8 -2.8h8.2v8.2l-2.8 2.8M649.9 107.3l2.8 -2.8"/>
<path d="M644.5 104.5v8.2h8.2M644.5 112.7l-2.8 2.8" stroke-width=".5"/>
</g>
<path d="M641.700 115.500l2.800-2.800h8.200l-2.800 2.800z" fill="#6fa5d8"/>
<rect x="660.3" y="104.7" width="8.2" height="8.2" fill="#6fa5d8"/>
<g fill="none" stroke="#1b1b20" stroke-width=".8"><rect x="657.5" y="107.3" width="8.2" height="8.2"/><path d="M657.5 107.3l2.8 -2.8h8.2v8.2l-2.8 2.8M665.7 107.3l2.8 -2.8"/>
<path d="M660.3 104.5v8.2h8.2M660.3 112.7l-2.8 2.8" stroke-width=".5"/>
</g>
<path d="M657.500 107.300l5.500 4 5.500-6.800M657.500 115.500l5.500-4.200 5.500 1.400" stroke="#1b1b20" stroke-width=".6" fill="none"/>
<g transform="rotate(-38 679 110)"><rect x="673.500" y="106" width="11" height="8" fill="#fff" stroke="#1b1b20" stroke-width=".8"/><rect x="681" y="106" width="3.500" height="8" fill="#6fa5d8" stroke="#1b1b20" stroke-width=".6"/><path d="M677 106v8M673.500 110h7.500" stroke="#1b1b20" stroke-width=".5"/></g>
<path d="M689 113h4M689 114.5h4l-2 2.2z" stroke="#333" stroke-width="0.6" fill="#333"/>
<path d="M701 104v12" stroke="#9ab520" stroke-width="1" stroke-dasharray="1.3 1.3" fill="none"/>
<rect x="705.500" y="104.500" width="11.500" height="11.500" fill="#d4e6f7" stroke="#3d78c0" stroke-width="1"/><path d="M709.300 104.500v11.500M713.200 104.500v11.500M705.500 108.300h11.500M705.500 112.200h11.500" stroke="#3d78c0" stroke-width="1"/>
<g stroke-width="1.200"><path d="M727 111v-6" stroke="#d42a3a"/><path d="M727 111l-4.500 3.500" stroke="#e8922a"/><path d="M727 111l5 3.500" stroke="#2a3fd0"/><path d="M723.500 108.500l6 6" stroke="#222" stroke-width="1"/></g><circle cx="727" cy="105" r="1.100" fill="#d42a3a"/><circle cx="732.300" cy="114.500" r="1.200" fill="#5a6fe0"/>
<path d="M739 116l4.300-11.500h1l4.300 11.500M740.800 112h6" stroke="#1a1a1a" stroke-width="1.400" fill="none"/><path d="M743.800 103.500v13.500" stroke="#1a1a1a" stroke-width=".7" stroke-dasharray="1.500 1"/>
<path d="M752.5 104.5v11" stroke="#9a9a9a" stroke-width="0.8"/>
<g fill="none" stroke="#111" stroke-width="1.100"><rect x="757.500" y="107" width="8" height="8"/><rect x="760.500" y="104.500" width="8" height="8"/></g>
<path d="M773.500 107.500l2.800-3h8.200v8.200l-2.800 3h-8.200z" fill="#6fa5d8"/><path d="M773.500 107.500h8.200v8.200h-8.200z" fill="#74aadc"/><path d="M781.700 107.500l2.800-3v8.200l-2.800 3z" fill="#5b90c6"/><path d="M773.500 107.500l2.800-3h8.200l-2.800 3z" fill="#8cbbe6"/>
<rect x="787" y="102.500" width="15.600" height="15.600" fill="#c9a6dd"/>
<rect x="789.500" y="107" width="8.500" height="8" fill="#6fa5d8"/><g fill="none" stroke="#111" stroke-width="1"><rect x="789.500" y="107" width="8.500" height="8"/><path d="M789.500 107l2.500-2.500h8.500v8l-2.500 2.500M798 107l2.500-2.500"/><path d="M792 104.500v8h8.500M792 112.500l-2.500 2.500" stroke-width=".6"/></g>
<path d="M810.500 107l2.500-2.500h4v5l-2.500 2.500z" fill="#6fa5d8"/><g fill="none" stroke="#111" stroke-width="1"><rect x="806" y="110" width="5" height="5"/><rect x="808" y="108.500" width="5" height="5"/></g>
<g fill="none" stroke="#d42a3a" stroke-width="1"><rect x="820.5" y="109.500" width="6" height="6"/><rect x="825" y="104.500" width="6" height="6"/><path d="M820.5 109.500l4.500-5M826.5 115.500l4.500-5"/></g>
<path d="M826.5 108v4.500h-3.500" stroke="#111" stroke-width="1" fill="none"/>
<g fill="none" stroke="#d42a3a" stroke-width="1"><rect x="836.5" y="109.500" width="6" height="6"/><rect x="841" y="104.500" width="6" height="6"/><path d="M836.5 109.500l4.500-5M842.5 115.500l4.500-5"/></g>
<path d="M842.5 108v4.500h-3.500" stroke="#111" stroke-width="1" fill="none"/>
<g fill="none" stroke="#d42a3a" stroke-width="1"><rect x="852.5" y="109.500" width="6" height="6"/><rect x="857" y="104.500" width="6" height="6"/><path d="M852.5 109.500l4.500-5M858.5 115.500l4.500-5"/></g>
<path d="M858.5 108v4.500h-3.500" stroke="#111" stroke-width="1" fill="none"/>
<path d="M867.5 104.5v11" stroke="#9a9a9a" stroke-width="0.8"/>
<rect x="870.600" y="103" width="27.500" height="14" fill="#f3f3f1" stroke="#a9a9a9" stroke-width=".8"/><rect x="889" y="103.400" width="8.800" height="13.200" fill="#e9e9e7"/><path d="M888.800 103.400v13.200" stroke="#b5b5b5" stroke-width=".7"/>
<path d="M891.5 108.3h3.6l-1.8 1.8z" fill="#2b4a8a"/>
<path d="M901.500 113l5.300 3.500 5.300-3.500-5.300-2z" fill="#d94a2a"/><path d="M902.500 111.500l4.300 2.500 4.300-2.500-4.300-5z" fill="#f0a830"/><path d="M903.800 109.500l3 1.500 3-1.500-3-4.500z" fill="#b8d838"/><path d="M905 107.200l1.800.8 1.800-.8-1.800-3z" fill="#58b848"/>
<path d="M916.3 104.5v11" stroke="#9a9a9a" stroke-width="0.8"/>
<rect x="919" y="102.500" width="15.600" height="15.600" fill="#c9a6dd"/>
<path d="M922 107.500l5-2.500 5 2.500-5 2.500z" fill="#f0b878"/><path d="M922 107.500v5.500l5 2.800v-5.800z" fill="#b89868"/><path d="M932 107.500v5.500l-5 2.800v-5.800z" fill="#8e7a58"/>
<path d="M937.500 107l5-2.500 5.500 2.500-5 2z" fill="#7ab0e4"/><path d="M937.500 107l5.500 2 -0.500 7z" fill="#4a88c8"/><path d="M948 107l-5 2-.5 7z" fill="#2f68a8"/>
<ellipse cx="957" cy="108.500" rx="4.500" ry="3.300" fill="#4a90d8"/><ellipse cx="957.500" cy="109" rx="2" ry="1.300" fill="#cfe0f0"/><path d="M954 116l9.500-10.500-1 4-6.500 7z" fill="#e0606a"/>
<path d="M968 113h4M968 114.5h4l-2 2.2z" stroke="#333" stroke-width="0.6" fill="#333"/>
</svg>
<div class="t" style="left:873px;top:105.500px;font-size:8px;color:#111">1</div>
<div id="work" class="abs"></div>
<div class="abs" style="left:98px;top:737px;width:38px;height:15px;background:#8f9197"></div>
<div class="abs" style="left:99px;top:120px;width:17px;height:365px;background:#ecebe9;border-right:1px solid #6e6f73;border-bottom:1px solid #6e6f73"></div>
<div class="abs" style="left:118px;top:120px;width:18px;height:261px;background:#ecebe9;border-right:1px solid #6e6f73;border-bottom:1px solid #6e6f73"></div>
<div class="abs" style="left:118px;top:384px;width:18px;height:117px;background:#ecebe9;border-right:1px solid #6e6f73;border-bottom:1px solid #6e6f73"></div>
<svg class="abs" style="left:98px;top:119px" width="40" height="390" viewBox="98 119 40 390">
<path d="M101.5 124.8h12" stroke="#9ab520" stroke-width="1" stroke-dasharray="1.300 1.300"/>
<rect x="100" y="127" width="15.500" height="15.700" fill="#c9a6dd"/>
<path d="M104.5 129.0 104.5 139.0 106.8 136.8 108.5 140.3 110.0 139.6 108.4 136.2 111.5 136.2z" fill="#3a3a44"/>
<path d="M101.5 145.0 101.5 154.5 103.7 152.4 105.3 155.7 106.7 155.1 105.2 151.8 108.2 151.8z" fill="#333"/>
<path d="M108 147l3 1.500 3-2M108.500 151.500h5.500" stroke="#111" stroke-width="1" fill="none"/>
<path d="M101.5 160.5 101.5 170.0 103.7 167.9 105.3 171.2 106.7 170.6 105.2 167.3 108.2 167.3z" fill="#333"/>
<path d="M108.500 165.300h6M111.500 162.300v6" stroke="#111" stroke-width="1.200"/>
<path d="M101.5 176.5 101.5 186.0 103.7 183.9 105.3 187.2 106.7 186.6 105.2 183.3 108.2 183.3z" fill="#333"/>
<path d="M108.500 180.300h6" stroke="#111" stroke-width="1.300"/>
<path d="M102 192h11" stroke="#8a8a8a" stroke-width=".7"/>
<rect x="100" y="195.400" width="15.500" height="46.800" fill="#c9a6dd"/>
<rect x="102" y="197.500" width="11.500" height="11" fill="#d8c8f0" stroke="#3a58b0" stroke-width=".8"/><path d="M105.800 197.500v11M109.600 197.500v11M102 201.200h11.500M102 204.800h11.500" stroke="#3a58b0" stroke-width=".7"/><circle cx="105" cy="201.500" r="1.500" fill="#d42a3a"/>
<path d="M107.0 200.5 107.0 208.5 108.8 206.7 110.2 209.5 111.4 209.0 110.1 206.3 112.6 206.3z" fill="#222"/>
<g fill="none" stroke="#445" stroke-width=".7"><path d="M103 215.500l3-2.500h8v8l-3 2.500h-8zM103 215.500h8v8M111 215.500l3-2.500"/></g><circle cx="103.500" cy="216" r="1.300" fill="#d42a3a"/>
<path d="M104.5 216.5 104.5 225.0 106.5 223.1 107.9 226.1 109.2 225.5 107.8 222.6 110.5 222.6z" fill="#222"/>
<path d="M103 231l3-2.500h8v8l-3 2.500h-8z" fill="#6a6a98" stroke="#334" stroke-width=".6"/><path d="M103 231h8v8.500" fill="none" stroke="#223" stroke-width=".6"/><circle cx="103.500" cy="231.500" r="1.300" fill="#d42a3a"/>
<path d="M104.5 232.0 104.5 240.5 106.5 238.6 107.9 241.6 109.2 241.0 107.8 238.1 110.5 238.1z" fill="#222"/>
<path d="M102 244.5h11" stroke="#8a8a8a" stroke-width=".7"/>
<rect x="100" y="247" width="15.500" height="15.500" fill="#c9a6dd"/>
<text x="103" y="258.400" font-size="10" font-weight="bold" fill="#2a48b0" font-family="Liberation Sans,sans-serif" textLength="10.500" lengthAdjust="spacingAndGlyphs">All</text>
<path d="M107.5 264.8l4.94 2.34l-4.94 2.34l-4.94 -2.34z" fill="#a8d8f0"/><path d="M102.56 267.14l4.94 2.34v5.46l-4.94 -2.34z" fill="#6ab8e0"/><path d="M112.44 267.14l-4.94 2.34v5.46l4.94 -2.34z" fill="#4a9ccc"/><path d="M102.500 267l5 2.500 5-2.500M107.500 269.500v5.500" fill="none" stroke="#2a6a9a" stroke-width=".5"/>
<path d="M102 290l2.800-8 2.800 8z" fill="#2f68b8"/><rect x="107.500" y="281.500" width="5.500" height="4.500" fill="#e0503a"/><circle cx="109.500" cy="288.500" r="3" fill="#4aa848"/>
<path d="M107.500 303v-6" stroke="#d42a3a" stroke-width="1.200"/><path d="M107.500 295l-2 3h4z" fill="#d42a3a"/><path d="M107.500 303l-4.500 3.500M107.500 303l4.500 3.500" stroke="#2a3fb0" stroke-width="1.300"/><circle cx="107.500" cy="303" r="1.300" fill="#222"/><circle cx="103" cy="306.500" r="1.300" fill="#e8922a"/>
<circle cx="107.500" cy="318" r="4.300" fill="#2a4aa8"/><circle cx="107" cy="317" r="2" fill="#a8c8f4"/><path d="M103 321.500q4.500 3 9 0" stroke="#16245a" stroke-width="1.400" fill="none"/><path d="M110 313.500l2-2M105 313.500l-2-2" stroke="#16245a" stroke-width="1"/>
<text x="102.500" y="338" font-size="12.500" font-weight="bold" font-style="italic" fill="#1c2a58" font-family="Liberation Serif,serif">F</text><path d="M104 328.500h9" stroke="#1c2a58" stroke-width=".9"/>
<circle cx="105" cy="347" r="3.600" fill="#3a8ac8"/><circle cx="110" cy="351" r="4" fill="#5aa8dc"/>
<circle cx="107.500" cy="365" r="4.800" fill="#cfe0f4" stroke="#2a4a90" stroke-width="1"/><path d="M107.500 359.500v11M102 365h11M103.700 361.200l7.600 7.600M111.300 361.200l-7.600 7.600" stroke="#2a4a90" stroke-width=".6"/><circle cx="107.500" cy="365" r="1.600" fill="#2a4a90"/>
<path d="M107.5 376.2l4.56 2.16l-4.56 2.16l-4.56 -2.16z" fill="#4a68b8"/><path d="M102.94 378.36l4.56 2.16v5.04l-4.56 -2.16z" fill="#16245a"/><path d="M112.06 378.36l-4.56 2.16v5.04l4.56 -2.16z" fill="#0c1638"/><circle cx="106.500" cy="381.500" r="1.300" fill="#9ac0f0"/>
<path d="M102 390.5h11" stroke="#8a8a8a" stroke-width=".7"/>
<rect x="100" y="393" width="15.500" height="16" fill="#c9a6dd"/>
<rect x="102.500" y="396" width="10.500" height="10" fill="none" stroke="#5a3a7a" stroke-width=".8" stroke-dasharray="1.500 1.200"/>
<circle cx="107.500" cy="417" r="5" fill="none" stroke="#555" stroke-width=".7" stroke-dasharray="1.500 1.200"/>
<path d="M107.500 427.500l5 3.800-1.900 6h-6.200l-1.900-6z" fill="none" stroke="#666" stroke-width=".7" stroke-dasharray="1.500 1.200"/>
<path d="M102 442h11" stroke="#8a8a8a" stroke-width=".7"/>
<rect x="100" y="445" width="15.500" height="16" fill="#c9a6dd"/>
<rect x="105.500" y="447.5" width="7.500" height="7.500" fill="#fff" stroke="#222" stroke-width=".8"/><rect x="102.500" y="450.5" width="7.500" height="7.500" fill="#f0e090" stroke="#222" stroke-width=".8"/>
<rect x="105.500" y="463.5" width="7.500" height="7.500" fill="#fff" stroke="#222" stroke-width=".8"/><rect x="102.500" y="466.5" width="7.500" height="7.500" fill="#f0e090" stroke="#222" stroke-width=".8"/>
<path d="M111.5 479l2.500 2-2.500 2z" fill="#555"/>
<path d="M120.5 124.8h12" stroke="#9ab520" stroke-width="1" stroke-dasharray="1.300 1.300"/>
<path d="M122.500 139.3v-9" stroke="#a030b0" stroke-width="1.100"/><path d="M122.500 128.8l-1.800 3h3.600z" fill="#a030b0"/><path d="M122.500 139.3h9" stroke="#3a8ad8" stroke-width="1.100"/><path d="M133 139.3l-3-1.800v3.600z" fill="#3a8ad8"/><circle cx="122.500" cy="139.3" r="1.500" fill="#e8822a"/><text x="124.300" y="136.8" font-size="7.500" font-weight="bold" fill="#1a1a2a" font-family="Liberation Sans,sans-serif" textLength="8.500" lengthAdjust="spacingAndGlyphs">XY</text>
<path d="M122.500 154.8v-9" stroke="#3a8ad8" stroke-width="1.100"/><path d="M122.500 144.3l-1.800 3h3.600z" fill="#3a8ad8"/><path d="M122.500 154.8h9" stroke="#a030b0" stroke-width="1.100"/><path d="M133 154.8l-3-1.800v3.600z" fill="#a030b0"/><circle cx="122.500" cy="154.8" r="1.500" fill="#e8822a"/><text x="124.300" y="152.3" font-size="7.500" font-weight="bold" fill="#1a1a2a" font-family="Liberation Sans,sans-serif" textLength="8.500" lengthAdjust="spacingAndGlyphs">YX</text>
<path d="M122.500 170.8v-9" stroke="#e8822a" stroke-width="1.100"/><path d="M122.500 160.3l-1.800 3h3.600z" fill="#e8822a"/><path d="M122.500 170.8h9" stroke="#a030b0" stroke-width="1.100"/><path d="M133 170.8l-3-1.800v3.600z" fill="#a030b0"/><circle cx="122.500" cy="170.8" r="1.500" fill="#3a8ad8"/><text x="124.300" y="168.3" font-size="7.500" font-weight="bold" fill="#1a1a2a" font-family="Liberation Sans,sans-serif" textLength="8.500" lengthAdjust="spacingAndGlyphs">YZ</text>
<path d="M122.500 186.6v-9" stroke="#a030b0" stroke-width="1.100"/><path d="M122.500 176.1l-1.800 3h3.600z" fill="#a030b0"/><path d="M122.500 186.6h9" stroke="#e8822a" stroke-width="1.100"/><path d="M133 186.6l-3-1.800v3.600z" fill="#e8822a"/><circle cx="122.500" cy="186.6" r="1.500" fill="#3a8ad8"/><text x="124.300" y="184.1" font-size="7.500" font-weight="bold" fill="#1a1a2a" font-family="Liberation Sans,sans-serif" textLength="8.500" lengthAdjust="spacingAndGlyphs">ZY</text>
<path d="M122.500 202.3v-9" stroke="#3a8ad8" stroke-width="1.100"/><path d="M122.500 191.8l-1.800 3h3.600z" fill="#3a8ad8"/><path d="M122.500 202.3h9" stroke="#e8822a" stroke-width="1.100"/><path d="M133 202.3l-3-1.800v3.600z" fill="#e8822a"/><circle cx="122.500" cy="202.3" r="1.500" fill="#a030b0"/><text x="124.300" y="199.8" font-size="7.500" font-weight="bold" fill="#1a1a2a" font-family="Liberation Sans,sans-serif" textLength="8.500" lengthAdjust="spacingAndGlyphs">ZX</text>
<path d="M122.500 218.2v-9" stroke="#e8822a" stroke-width="1.100"/><path d="M122.500 207.7l-1.800 3h3.600z" fill="#e8822a"/><path d="M122.500 218.2h9" stroke="#3a8ad8" stroke-width="1.100"/><path d="M133 218.2l-3-1.800v3.600z" fill="#3a8ad8"/><circle cx="122.500" cy="218.2" r="1.500" fill="#a030b0"/><text x="124.300" y="215.7" font-size="7.500" font-weight="bold" fill="#1a1a2a" font-family="Liberation Sans,sans-serif" textLength="8.500" lengthAdjust="spacingAndGlyphs">XZ</text>
<circle cx="126.500" cy="233" r="3.600" fill="none" stroke="#222" stroke-width="1"/><path d="M126.500 233v-6.500" stroke="#d42a3a" stroke-width="1"/><path d="M126.500 225.500l-1.500 2.500h3z" fill="#d42a3a"/><path d="M126.500 233h5" stroke="#3a8ad8" stroke-width="1"/><path d="M133 233l-2.500-1.500v3z" fill="#3a8ad8"/><circle cx="126.500" cy="233" r="1.300" fill="#e8822a"/>
<path d="M121 240.5h11" stroke="#8a8a8a" stroke-width=".7"/>
<path d="M128 244.8l3.99 1.89l-3.99 1.89l-3.99 -1.89z" fill="#b0d8f0"/><path d="M124.01 246.69l3.99 1.89v4.41l-3.99 -1.89z" fill="#5a9ad0"/><path d="M131.99 246.69l-3.99 1.89v4.41l3.99 -1.89z" fill="#3f7eb8"/><path d="M120.5 244 124.5 246 124.5 255 120.5 253z" fill="#c8a888"/>
<path d="M128 259.5 133.5 262 133.5 270.5 128 268z" fill="#c8a888"/><path d="M126 261.8l3.99 1.89l-3.99 1.89l-3.99 -1.89z" fill="#b0d8f0"/><path d="M122.01 263.69l3.99 1.89v4.41l-3.99 -1.89z" fill="#5a9ad0"/><path d="M129.99 263.69l-3.99 1.89v4.41l3.99 -1.89z" fill="#3f7eb8"/>
<path d="M126 276 120.5 278.5 120.5 287 126 284.5z" fill="#a88a6a"/><path d="M128 278.3l3.99 1.89l-3.99 1.89l-3.99 -1.89z" fill="#b0d8f0"/><path d="M124.01 280.19l3.99 1.89v4.41l-3.99 -1.89z" fill="#5a9ad0"/><path d="M131.99 280.19l-3.99 1.89v4.41l3.99 -1.89z" fill="#3f7eb8"/>
<path d="M126 292.8l3.99 1.89l-3.99 1.89l-3.99 -1.89z" fill="#b0d8f0"/><path d="M122.01 294.69l3.99 1.89v4.41l-3.99 -1.89z" fill="#5a9ad0"/><path d="M129.99 294.69l-3.99 1.89v4.41l3.99 -1.89z" fill="#3f7eb8"/><path d="M133.5 292 129.5 294 129.5 303 133.5 301z" fill="#a88a6a"/>
<path d="M127 310.3l3.99 1.89l-3.99 1.89l-3.99 -1.89z" fill="#b0d8f0"/><path d="M123.01 312.19l3.99 1.89v4.41l-3.99 -1.89z" fill="#5a9ad0"/><path d="M130.99 312.19l-3.99 1.89v4.41l3.99 -1.89z" fill="#3f7eb8"/><path d="M127 306.5 133 309 127 311.5 121 309z" fill="#c8a888"/>
<path d="M127 330 133.5 332.5 127 335.5 120.5 332.5z" fill="#a88a6a"/><path d="M127 323.8l3.99 1.89l-3.99 1.89l-3.99 -1.89z" fill="#b0d8f0"/><path d="M123.01 325.69l3.99 1.89v4.41l-3.99 -1.89z" fill="#5a9ad0"/><path d="M130.99 325.69l-3.99 1.89v4.41l3.99 -1.89z" fill="#3f7eb8"/>
<path d="M120.5 339.7 124.5 341.7 124.5 350.7 120.5 348.7z" fill="#c8a888"/><path d="M129 341.2l3.325 1.575l-3.325 1.575l-3.325 -1.575z" fill="#b0d8f0"/><path d="M125.675 342.775l3.325 1.575v3.675l-3.325 -1.575z" fill="#5a9ad0"/><path d="M132.325 342.775l-3.325 1.575v3.675l3.325 -1.575z" fill="#3f7eb8"/><path d="M131 343.7 133.5 343.7 133.5 349.7 131 349.7z" fill="#7ab0e0"/>
<path d="M121 354.5h11" stroke="#8a8a8a" stroke-width=".7"/>
<rect x="121.500" y="359" width="9" height="6.500" fill="#3a68c0"/><rect x="124" y="362.500" width="9" height="8" fill="#f4f4f4" stroke="#333" stroke-width=".6"/><path d="M125.500 364.500h6M125.500 366.500h6M125.500 368.500h6" stroke="#333" stroke-width=".7"/>
<path d="M130.5 375l2.500 2-2.500 2z" fill="#555"/>
<path d="M120.5 387.8h12" stroke="#9ab520" stroke-width="1" stroke-dasharray="1.300 1.300"/>
<path d="M121.5 392.0 121.5 402.0 123.8 399.8 125.5 403.3 127.0 402.6 125.4 399.2 128.5 399.2z" fill="#333"/>
<circle cx="130" cy="394" r="2.600" fill="#fff" stroke="#2a58c0" stroke-width="1.100"/>
<path d="M121.5 408.0 121.5 418.0 123.8 415.8 125.5 419.3 127.0 418.6 125.4 415.2 128.5 415.2z" fill="#333"/>
<circle cx="129.500" cy="411.500" r="3.300" fill="#d42a3a"/><path d="M127.500 411.500h4" stroke="#fff" stroke-width=".9"/>
<path d="M121 424h11" stroke="#8a8a8a" stroke-width=".7"/>
<g fill="none" stroke="#111" stroke-width=".9"><path d="M120.500 434h13M127 428v12"/><path d="M122.500 432l-2 2 2 2M131.500 432l2 2-2 2M125 430l2-2 2 2M125 438l2 2 2-2"/><ellipse cx="127" cy="434" rx="3" ry="4.500"/></g>
<g fill="none" stroke="#111" stroke-width=".9"><path d="M121.500 444.500l11 11M132.500 444.500l-11 11"/><rect x="123.500" y="446.500" width="7" height="7"/><path d="M121.500 447v-2.500h2.500M130 444.500h2.500v2.500M121.500 453v2.500h2.500M132.500 453v2.500h-2.500"/></g>
<path d="M121 459.5h11" stroke="#8a8a8a" stroke-width=".7"/>
<path d="M127 465l5.225 2.475l-5.225 2.475l-5.225 -2.475z" fill="#3a9a4a"/><path d="M121.775 467.475l5.225 2.475v5.775l-5.225 -2.475z" fill="#c03040"/><path d="M132.225 467.475l-5.225 2.475v5.775l5.225 -2.475z" fill="#2a48a0"/><path d="M121.800 467.500l5.200 2.500 5.200-2.500M127 470v6" fill="none" stroke="#fff" stroke-width=".4"/>
<g stroke="#f08a2a" stroke-width="1.300"><path d="M122 481l10 10M132 481l-10 10M127 480v4"/></g><circle cx="127" cy="486" r="2.200" fill="#3a9ad8"/>
<path d="M130.5 495l2.500 2-2.500 2z" fill="#555"/>
</svg>
<div class="abs" style="left:137px;top:133.600px;width:1175px;height:1px;background:#7a7b80"></div>
<div class="abs" style="left:137px;top:134.500px;width:1175px;height:1px;background:#d9d9db"></div>
<div class="abs" style="left:138px;top:122px;width:104.500px;height:13.500px;background:linear-gradient(#f2f2f2,#dddddf);border:1px solid #6e6f73;border-bottom:none;border-radius:2px 2px 0 0"></div>
<div class="t" style="left:156.500px;top:123.700px;font-size:10.200px;font-weight:bold;color:#111;letter-spacing:-.17px;-webkit-text-stroke:0">新型爬壁机器人</div>
<svg class="abs" style="left:142px;top:122px" width="120" height="13" viewBox="142 122 120 13"><path d="M143.800 123.800h6.500v8.400h-6.500z" fill="#fff" stroke="#aaa" stroke-width=".4"/><path d="M145.58 123.48L149.74 126.14L148.60 127.80L146.94 126.76z" fill="#d8313a"/><path d="M153.18 125.62L150.16 129.52L148.60 127.80L148.86 125.88z" fill="#f0a81c"/><path d="M151.04 132.53L146.78 128.68L148.60 127.80L150.32 127.28z" fill="#3aa63a"/><path d="M142.46 129.72L146.94 125.88L148.60 127.80L148.08 129.36z" fill="#2f48b8"/><path d="M233.500 125.500l4.500 4.500M238 125.500l-4.500 4.500" stroke="#222" stroke-width=".9"/><path d="M250 123.500h5.200l2.800 2.800v6.200h-8z" fill="#fff" stroke="#222" stroke-width=".9"/><path d="M255.200 123.500v2.800h2.800" fill="none" stroke="#222" stroke-width=".7"/></svg>
<svg class="abs" style="left:1290px;top:122px" width="22" height="11" viewBox="1290 122 22 11"><path d="M1295.600 126h4.500l-2.250 2.600z" fill="#222"/><path d="M1305 125l4 4M1309 125l-4 4" stroke="#222" stroke-width=".9"/></svg>
<div class="abs" style="left:137px;top:135.500px;width:174.500px;height:0"></div>
<div class="abs" style="left:137px;top:135.500px;width:1174.500px;height:601px;background:#dededf;border-right:1px solid #b4b4b8;border-bottom:1px solid #55565a"></div>
<div class="abs" id="vp" style="left:140px;top:138px;width:1167px;height:593px;background:linear-gradient(#fff 0%,#fff 1%,rgb(237,237,236) 10.3%,rgb(206,207,207) 28.9%,rgb(178,179,181) 47.5%,rgb(143,147,151) 71.1%,rgb(103,108,113) 100%);border-left:1.200px solid #111;border-top:1.200px solid #111;overflow:hidden">
<svg class="abs" style="left:0;top:0" width="1165.800" height="591.800" viewBox="141.200 139.200 1165.800 591.800">
<path d="M141 445.200L916 441.600L930 511L141 515.500z" fill="#747880" stroke="#3d5a55" stroke-width=".7"/>
<path d="M141 503.700L930 511" stroke="#4a5660" stroke-width=".6" fill="none"/>
<path d="M916 325.800L1308 324L1308 394.200L930 396z" fill="#747880" stroke="#3d5a55" stroke-width=".7"/>
<path d="M916 325.800L1308 342.600" stroke="#4a5660" stroke-width=".6" fill="none"/>
<path d="M916 325.800L930 396L930 511L916 441.600z" fill="#70747c" stroke="#3d5a55" stroke-width=".7"/>
<path d="M930 396L916 441.600" stroke="#4a5660" stroke-width=".6" fill="none"/>
<path d="M433.0 355.5L664.0 355.5A53.5 53.5 0 0 1 664.0 462.5L433.0 462.5A53.5 53.5 0 0 1 433.0 355.5z" fill="none" stroke="#215829" stroke-width="12"/><path d="M433.0 355.5L664.0 355.5A53.5 53.5 0 0 1 664.0 462.5L433.0 462.5A53.5 53.5 0 0 1 433.0 355.5z" fill="none" stroke="#2b6a35" stroke-width="19" stroke-dasharray="9.500 5.500" stroke-dashoffset="0"/><path d="M433.0 355.5L664.0 355.5A53.5 53.5 0 0 1 664.0 462.5L433.0 462.5A53.5 53.5 0 0 1 433.0 355.5z" fill="none" stroke="#2f7239" stroke-width="9" stroke-dasharray="8.500 6.500" stroke-dashoffset="-0.5"/><path d="M433.0 362.0L664.0 362.0A47 47 0 0 1 664.0 456.0L433.0 456.0A47 47 0 0 1 433.0 362.0z" fill="none" stroke="#276632" stroke-width="7" stroke-linecap="round" stroke-dasharray="0.100 14.900" stroke-dashoffset="3"/>
<path d="M671.3 343.5L818.1 364.3A29 29 0 0 1 818.8 421.6L672.7 446.3A52 52 0 1 1 671.3 343.5z" fill="none" stroke="#215829" stroke-width="12"/><path d="M671.3 343.5L818.1 364.3A29 29 0 0 1 818.8 421.6L672.7 446.3A52 52 0 1 1 671.3 343.5z" fill="none" stroke="#2b6a35" stroke-width="19" stroke-dasharray="9.500 5.500" stroke-dashoffset="0"/><path d="M671.3 343.5L818.1 364.3A29 29 0 0 1 818.8 421.6L672.7 446.3A52 52 0 1 1 671.3 343.5z" fill="none" stroke="#2f7239" stroke-width="9" stroke-dasharray="8.500 6.500" stroke-dashoffset="-0.5"/><path d="M670.4 349.9L817.2 370.7A22.5 22.5 0 0 1 817.7 415.2L671.6 439.9A45.5 45.5 0 1 1 670.4 349.9z" fill="none" stroke="#276632" stroke-width="7" stroke-linecap="round" stroke-dasharray="0.100 14.900" stroke-dashoffset="3"/>
<circle cx="664" cy="395" r="46" fill="#1f5a2c"/>
<circle cx="664" cy="395" r="33" fill="none" stroke="#2f7a3c" stroke-width="9" stroke-dasharray="5.500 2.500"/><circle cx="664" cy="395" r="19" fill="none" stroke="#2a6e36" stroke-width="9" stroke-dasharray="5.500 2.500"/>
<path d="M706 366L800 377L800 412L722 417z" fill="#8e4aa0" stroke="#6a2a80" stroke-width=".4"/>
<circle cx="814" cy="394" r="23" fill="#4150b4" stroke="#2a3590" stroke-width=".5"/>
<circle cx="747.500" cy="373.500" r="8" fill="#4a9cce" stroke="#2a6c9e" stroke-width=".5"/>
<path d="M418 375L432 361L668 361L668 380L420 384z" fill="#e8661e"/>
<path d="M463 383L640 383L640 456L463 456z" fill="#d84e20" stroke="#7a3010" stroke-width=".4"/>
<path d="M463 425.500H640M499 416v9.500M562.500 416v9.500" stroke="#7a3010" stroke-width=".6" fill="none"/>
<circle cx="434" cy="430" r="44" fill="#d4d4d4"/>
<circle cx="458.4" cy="391.6" r="3.200" fill="#d4d4d4"/><circle cx="465.6" cy="397.3" r="3.200" fill="#d4d4d4"/><circle cx="471.5" cy="404.2" r="3.200" fill="#d4d4d4"/><circle cx="475.9" cy="412.2" r="3.200" fill="#d4d4d4"/><circle cx="478.6" cy="420.9" r="3.200" fill="#d4d4d4"/><circle cx="479.5" cy="430.0" r="3.200" fill="#d4d4d4"/><circle cx="478.6" cy="439.1" r="3.200" fill="#d4d4d4"/><circle cx="475.9" cy="447.8" r="3.200" fill="#d4d4d4"/><circle cx="471.5" cy="455.8" r="3.200" fill="#d4d4d4"/><circle cx="465.6" cy="462.7" r="3.200" fill="#d4d4d4"/><circle cx="458.4" cy="468.4" r="3.200" fill="#d4d4d4"/>
<circle cx="433.500" cy="429" r="25.500" fill="none" stroke="#44464c" stroke-width=".6"/>
<path d="M436.7 375.5L668.7 378.5A52.5 52.5 0 0 1 667.3 483.5L435.3 480.5A52.5 52.5 0 0 1 436.7 375.5z" fill="none" stroke="#215829" stroke-width="13"/><path d="M436.7 375.5L668.7 378.5A52.5 52.5 0 0 1 667.3 483.5L435.3 480.5A52.5 52.5 0 0 1 436.7 375.5z" fill="none" stroke="#2b6a35" stroke-width="20" stroke-dasharray="9.500 5.500" stroke-dashoffset="0"/><path d="M436.7 375.5L668.7 378.5A52.5 52.5 0 0 1 667.3 483.5L435.3 480.5A52.5 52.5 0 0 1 436.7 375.5z" fill="none" stroke="#2f7239" stroke-width="10" stroke-dasharray="8.500 6.500" stroke-dashoffset="-0.5"/><path d="M436.6 382.5L668.6 385.5A45.5 45.5 0 0 1 667.4 476.5L435.4 473.5A45.5 45.5 0 0 1 436.6 382.5z" fill="none" stroke="#276632" stroke-width="7" stroke-linecap="round" stroke-dasharray="0.100 14.900" stroke-dashoffset="3"/>
<circle cx="549" cy="394" r="12.500" fill="#9c3a48" stroke="#6a1a2a" stroke-width=".4"/><path d="M547.500 393v11" stroke="#f0d830" stroke-width="1.200"/><path d="M548 404h6" stroke="#b060d0" stroke-width=".6"/>
<rect x="484" y="347.500" width="9" height="12" fill="#e6e63a"/><circle cx="495.500" cy="357.500" r="3" fill="#e6e63a"/>
<rect x="518.500" y="363.500" width="10" height="17" fill="#e6e63a"/><circle cx="531.500" cy="379" r="3.800" fill="#e6e63a"/>
<circle cx="670" cy="437" r="43" fill="#d9d9d9"/>
<circle cx="826" cy="439" r="19" fill="#1f5a2c"/>
<path d="M708 414L796 411L796 420L722 420z" fill="#8e4aa0"/>
<path d="M682 391L724 396L727 419L692 414z" fill="#225e2e"/>
<path d="M678.6 387.8L830.5 414.4A26 26 0 0 1 829.5 465.8L676.7 486.5A50 50 0 1 1 678.6 387.8z" fill="none" stroke="#215829" stroke-width="12"/><path d="M678.6 387.8L830.5 414.4A26 26 0 0 1 829.5 465.8L676.7 486.5A50 50 0 1 1 678.6 387.8z" fill="none" stroke="#2b6a35" stroke-width="19" stroke-dasharray="9.500 5.500" stroke-dashoffset="0"/><path d="M678.6 387.8L830.5 414.4A26 26 0 0 1 829.5 465.8L676.7 486.5A50 50 0 1 1 678.6 387.8z" fill="none" stroke="#2f7239" stroke-width="9" stroke-dasharray="8.500 6.500" stroke-dashoffset="-0.5"/><path d="M677.5 394.2L829.4 420.8A19.5 19.5 0 0 1 828.6 459.3L675.9 480.1A43.5 43.5 0 1 1 677.5 394.2z" fill="none" stroke="#276632" stroke-width="7" stroke-linecap="round" stroke-dasharray="0.100 14.900" stroke-dashoffset="3"/>
<circle cx="756" cy="412.500" r="8" fill="#e8622a"/><circle cx="779" cy="416" r="8" fill="#c23a48"/>
<circle cx="737" cy="470.500" r="8" fill="#e8622a"/><circle cx="788" cy="462.500" r="8" fill="#e8622a"/>
<path d="M675.3 412.2L826.9 429.4A12.7 12.7 0 0 1 826.8 454.6L675.1 470.8A29.5 29.5 0 1 1 675.3 412.2z" fill="#9c3c4a" stroke="#5a1828" stroke-width=".6"/>
<circle cx="495.5" cy="463.300" r="13.200" fill="#3466ac"/><path d="M486 455a12 5 0 0 1 19 0" fill="none" stroke="#4a86cc" stroke-width="1.200"/>
<circle cx="549" cy="463.300" r="13.200" fill="#3466ac"/><path d="M539.5 455a12 5 0 0 1 19 0" fill="none" stroke="#4a86cc" stroke-width="1.200"/>
<circle cx="603.5" cy="463.300" r="13.200" fill="#3466ac"/><path d="M594 455a12 5 0 0 1 19 0" fill="none" stroke="#4a86cc" stroke-width="1.200"/>
<rect x="723.500" y="341" width="10" height="15" fill="#80e0e0"/><circle cx="735.500" cy="359" r="3.500" fill="#80e0e0"/>
<rect x="703" y="380" width="10" height="15" fill="#80e0e0"/><circle cx="715" cy="398" r="3.500" fill="#80e0e0"/>
<g fill="#d81f28" stroke="#a01018" stroke-width=".4">
<rect x="451" y="340" width="78" height="7"/><rect x="588" y="340" width="77" height="7"/>
<rect x="509.500" y="347" width="3" height="17"/><rect x="604.500" y="347" width="3" height="17"/>
<path d="M511 350h96v1.500h-96zM513 360.500h92v1.500h-92z"/>
<path d="M529 343l30 4 29-4v2l-29 5-30-5z"/>
<rect x="558" y="318" width="5" height="50"/>
<rect x="553.500" y="318" width="10.500" height="12" rx="1.500"/><rect x="555" y="338" width="10.500" height="12" rx="1.500"/>
<rect x="443" y="328" width="11" height="13" rx="1.500"/><rect x="663" y="328" width="11" height="13" rx="1.500"/>
<path d="M448 322v6M668.500 321.500v6.500M558.500 312.500v6" stroke-width="1.500" stroke="#555"/>
</g>
<path d="M448.5 322.3Q433.2 320.7 418.6 325.7Q433.9 327.3 448.5 322.3z" fill="#e02028" stroke="#8a1018" stroke-width=".3"/><path d="M448.5 322.3Q463.9 323.9 478.6 319.0Q463.2 317.4 448.5 322.3z" fill="#e02028" stroke="#8a1018" stroke-width=".3"/><circle cx="448.5" cy="322.3" r="1.600" fill="#555"/>
<path d="M558.0 312.5Q538.0 308.0 517.6 310.0Q537.6 314.5 558.0 312.5z" fill="#e02028" stroke="#8a1018" stroke-width=".3"/><path d="M558.0 312.5Q577.6 317.0 597.6 315.0Q578.0 310.5 558.0 312.5z" fill="#e02028" stroke="#8a1018" stroke-width=".3"/><circle cx="558" cy="312.5" r="1.600" fill="#555"/>
<path d="M559.0 333.0Q539.8 328.2 520.0 330.0Q539.2 334.8 559.0 333.0z" fill="#e02028" stroke="#8a1018" stroke-width=".3"/><path d="M559.0 333.0Q579.6 337.3 600.5 335.0Q579.9 330.7 559.0 333.0z" fill="#e02028" stroke="#8a1018" stroke-width=".3"/><circle cx="559" cy="333" r="1.600" fill="#555"/>
<path d="M668.0 321.7Q652.5 320.0 637.6 324.8Q653.1 326.5 668.0 321.7z" fill="#e02028" stroke="#8a1018" stroke-width=".3"/><path d="M668.0 321.7Q683.6 323.5 698.6 318.7Q683.0 316.9 668.0 321.7z" fill="#e02028" stroke="#8a1018" stroke-width=".3"/><circle cx="668" cy="321.7" r="1.600" fill="#555"/>
<path d="M237.6 549.8 231.8 555.2 243.4 555.2z" fill="#b4b0c4" opacity=".72"/>
<path d="M237.6 555.5 231.8 561 243.4 561z" fill="#b4b0c4" opacity=".72"/>
<path d="M237.6 562 231.8 572.6 243.4 572.6z" fill="#b4b0c4" opacity=".72"/>
<path d="M237.6 704.5 231.8 694.7 243.4 694.7z" fill="#b4b0c4" opacity=".72"/>
<path d="M237.6 711.7 231.8 706.5 243.4 706.5z" fill="#b4b0c4" opacity=".72"/>
<path d="M237.6 717.5 231.8 712 243.4 712z" fill="#b4b0c4" opacity=".72"/>
<path d="M153.6 633.8 159 628.4 159 639.2z" fill="#b4b0c4" opacity=".72"/>
<path d="M159.2 633.8 164.6 628.4 164.6 639.2z" fill="#b4b0c4" opacity=".72"/>
<path d="M166.5 633.8 176.8 628 176.8 639.6z" fill="#b4b0c4" opacity=".72"/>
<path d="M309 633.8 298.8 628 298.8 639.6z" fill="#b4b0c4" opacity=".72"/>
<path d="M315.5 633.8 309.5 628.4 309.5 639.2z" fill="#b4b0c4" opacity=".72"/>
<path d="M321.8 633.8 315.8 628.4 315.8 639.2z" fill="#b4b0c4" opacity=".72"/>
<g transform="rotate(-47 199.5 598.5)"><path d="M212.5 598.5 207 593.3 207 603.7z" fill="#b4b0c4" opacity=".72"/><path d="M206.8 598.5 201.3 593.3 201.3 603.7z" fill="#b4b0c4" opacity=".72"/><path d="M199 598.5 188.5 592.7 188.5 604.3z" fill="#b4b0c4" opacity=".72"/></g>
<g transform="rotate(-45 272 671)"><path d="M285 671 279.5 665.8 279.5 676.2z" fill="#b4b0c4" opacity=".72"/><path d="M279.3 671 273.8 665.8 273.8 676.2z" fill="#b4b0c4" opacity=".72"/><path d="M271.5 671 261 665.2 261 676.8z" fill="#b4b0c4" opacity=".72"/></g>
<path d="M218.500 633.800L232 618.800V627.700H257V640H232V649z" fill="none" stroke="#fff" stroke-width=".9"/>
<path d="M236.400 634V604h3V634z" fill="#7a2a86"/><path d="M237.900 592.600l-4.800 12.600h9.600z" fill="#8a2f98"/>
<path d="M240 631.600H267v3H240z" fill="#2a8890"/><path d="M279.200 633.100l-12.600-4.500v9z" fill="#3aa4ac"/>
<rect x="235.300" y="631.500" width="7.500" height="7.500" rx="1.500" fill="#c8c020" stroke="#444" stroke-width=".5"/><path d="M235.300 635l3.500-2.500 4 1.500" fill="none" stroke="#f0e840" stroke-width="1"/>
<text x="236.300" y="586.600" font-size="8.500" font-weight="bold" fill="#b440bc" font-family="Liberation Sans,sans-serif">Y</text>
<text x="284.600" y="633.600" font-size="9" font-weight="bold" fill="#64d0d8" font-family="Liberation Sans,sans-serif">X</text>
<text x="234.300" y="660.600" font-size="9.500" font-weight="bold" fill="#fff" font-family="Liberation Sans,sans-serif">g</text>
</svg>
</div>
<div class="t" style="left:146px;top:142.800px;font-size:9px;color:#3a80b8;-webkit-text-stroke:0">机器人</div>
<div class="abs" style="left:1312.500px;top:120px;width:4px;height:617px;background:#ecebe9"></div>
<div class="abs" style="left:1316.500px;top:120px;width:160.500px;height:617px;background:#fff"></div>
<div class="abs" style="left:1316.500px;top:120.500px;width:160.500px;height:14.500px;background:#fff;border:1px solid #dcdcdc;border-bottom-color:#bdbdbd;border-right:none"></div>
<div class="t" style="left:1319.500px;top:123.800px;font-size:8px;color:#a0a0a0">Database</div>
<svg class="abs" style="left:1436px;top:121px" width="41" height="13" viewBox="1436 121 41 13"><path d="M1439 123.500h8l-3 3.500v4l-2-1v-3z" fill="none" stroke="#444" stroke-width=".8"/><path d="M1455.500 123.500v4.500h3.500v-4.500M1454.500 128h5.500M1457.200 128v3.500M1458.300 123.500v4.500" stroke="#777" stroke-width=".7" fill="none"/><path d="M1468 124l5.500 5.500M1473.500 124l-5.500 5.500" stroke="#999" stroke-width=".8"/></svg>
<div class="tr" style="left:1331px;font-size:9px;top:139.6px">机器人</div>
<div class="tr" style="left:1347.5px;top:152.55px">Groups</div>
<div class="tr" style="left:1347.5px;top:165.5px">Bodies</div>
<div class="tr" style="left:1361.5px;top:178.45px">Ground</div>
<div class="tr" style="left:1361.5px;font-size:9px;top:191.4px">主体</div>
<div class="tr" style="left:1347.5px;top:204.35px">Joints</div>
<div class="tr" style="left:1347.5px;top:217.3px">Forces</div>
<div class="tr" style="left:1347.5px;top:230.25px">Couplers</div>
<div class="tr" style="left:1347.5px;top:243.2px">Contacts</div>
<div class="tr" style="left:1347.5px;top:256.15px">Requests</div>
<div class="tr" style="left:1347.5px;top:269.1px">Splines</div>
<div class="tr" style="left:1347.5px;top:282.05px">PP</div>
<div class="tr" style="left:1347.5px;top:295px">PV</div>
<div class="tr" style="left:1347.5px;top:307.95px">PPC</div>
<div class="tr" style="left:1347.5px;top:320.9px">PVC</div>
<div class="tr" style="left:1347.5px;top:333.85px">Strings</div>
<div class="tr" style="left:1347.5px;top:346.8px">Ex.</div>
<div class="tr" style="left:1361.5px;top:359.75px">Ex2</div>
<div class="tr" style="left:1347.5px;top:372.7px">USUB</div>
<div class="tr" style="left:1347.5px;top:385.65px">Diff.Eq</div>
<div class="tr" style="left:1347.5px;top:398.6px">Var.Eq</div>
<div class="tr" style="left:1347.5px;top:411.55px">Scopes</div>
<div class="tr" style="left:1347.5px;top:424.5px">Sensors</div>
<div class="tr" style="left:1347.5px;top:437.45px">BCs</div>
<div class="tr" style="left:1347.5px;top:450.4px">PI</div>
<div class="tr" style="left:1347.5px;top:463.35px">Constraints</div>
<div class="tr" style="left:1347.5px;top:476.3px">DP</div>
<div class="tr" style="left:1347.5px;top:489.25px">AR</div>
<div class="tr" style="left:1347.5px;top:502.2px">Subsystems</div>
<div class="tr" style="left:1361.5px;top:515.15px">Right_TrackL</div>
<div class="tr" style="left:1361.5px;top:528.1px">Left_TrackL</div>
<div class="tr" style="left:1347.5px;top:541.05px">PIN</div>
<div class="tr" style="left:1347.5px;top:554px">POUT</div>
<div class="tr" style="left:1347.5px;top:566.95px">GPIN</div>
<div class="tr" style="left:1347.5px;top:579.9px">GPOUT</div>
<div class="tr" style="left:1347.5px;top:592.85px">Vessels</div>
<div class="tr" style="left:1347.5px;top:605.8px">ParticleSets</div>
<div class="tr" style="left:1347.5px;top:618.75px">Walls</div>
<div class="tr" style="left:1347.5px;top:631.7px">TACT</div>
<div class="tr" style="left:1347.5px;top:644.65px">TSEN</div>
<svg class="abs" style="left:1316px;top:136px" width="161" height="600" viewBox="1316 136 161 600"><path d="M1324.500 150V648.55" stroke="#555" stroke-width=".7" stroke-dasharray="1 1.200" fill="none"/><path d="M1320.90 139.55L1324.90 142.10L1323.80 143.70L1322.20 142.70z" fill="#d8313a"/><path d="M1328.20 141.60L1325.30 145.35L1323.80 143.70L1324.05 141.85z" fill="#f0a81c"/><path d="M1326.15 148.25L1322.05 144.55L1323.80 143.70L1325.45 143.20z" fill="#3aa63a"/><path d="M1317.90 145.55L1322.20 141.85L1323.80 143.70L1323.30 145.20z" fill="#2f48b8"/><path d="M1325 156.45H1332.500" stroke="#555" stroke-width=".7" stroke-dasharray="1 1.200" fill="none"/><path d="M1333 160.45l3-8 3 8z" fill="#2f68b8"/><rect x="1338" y="152.45" width="5.500" height="4.500" fill="#d8403a"/><circle cx="1339.5" cy="158.45" r="2.600" fill="#4aa848"/><path d="M1325 169.4H1332.500" stroke="#555" stroke-width=".7" stroke-dasharray="1 1.200" fill="none"/><path d="M1338 164.4l4.75 2.25l-4.75 2.25l-4.75 -2.25z" fill="#a8d4ee"/><path d="M1333.25 166.65l4.75 2.25v5.25l-4.75 -2.25z" fill="#7ab8e0"/><path d="M1342.75 166.65l-4.75 2.25v5.25l4.75 -2.25z" fill="#5a9ccc"/><rect x="1321.300" y="166.2" width="6.400" height="6.400" fill="#fff" stroke="#8a8a8a" stroke-width=".7"/><path d="M1322.800 169.4h3.400" stroke="#333" stroke-width=".7"/><path d="M1339 182.35H1346" stroke="#555" stroke-width=".7" stroke-dasharray="1 1.200" fill="none"/><path d="M1352 177.55l4.56 2.16l-4.56 2.16l-4.56 -2.16z" fill="#8cc0ee"/><path d="M1347.44 179.71l4.56 2.16v5.04l-4.56 -2.16z" fill="#5a9ad8"/><path d="M1356.56 179.71l-4.56 2.16v5.04l4.56 -2.16z" fill="#3f7ec0"/><rect x="1335.300" y="179.15" width="6.400" height="6.400" fill="#fff" stroke="#8a8a8a" stroke-width=".7"/><path d="M1336.800 182.35h3.400M1338.500 180.65v3.400" stroke="#333" stroke-width=".7"/><path d="M1339 195.3H1346" stroke="#555" stroke-width=".7" stroke-dasharray="1 1.200" fill="none"/><path d="M1352 190.5l4.56 2.16l-4.56 2.16l-4.56 -2.16z" fill="#8cc0ee"/><path d="M1347.44 192.66l4.56 2.16v5.04l-4.56 -2.16z" fill="#5a9ad8"/><path d="M1356.56 192.66l-4.56 2.16v5.04l4.56 -2.16z" fill="#3f7ec0"/><rect x="1335.300" y="192.1" width="6.400" height="6.400" fill="#fff" stroke="#8a8a8a" stroke-width=".7"/><path d="M1336.800 195.3h3.400M1338.500 193.6v3.400" stroke="#333" stroke-width=".7"/><path d="M1325 208.25H1332.500" stroke="#555" stroke-width=".7" stroke-dasharray="1 1.200" fill="none"/><circle cx="1338" cy="208.25" r="4" fill="#2a4aa8"/><circle cx="1337.5" cy="207.25" r="1.800" fill="#9ac0f0"/><path d="M1334 212.25q4 3 8 0" stroke="#16245a" stroke-width="1.300" fill="none"/><path d="M1340.5 204.75l2-2M1335.5 204.75l-2-2" stroke="#16245a" stroke-width=".9"/><path d="M1325 221.2H1332.500" stroke="#555" stroke-width=".7" stroke-dasharray="1 1.200" fill="none"/><text x="1334" y="225.2" font-size="11.5" fill="#1c2a58" font-family="Liberation Serif,serif" font-weight="bold" font-style="italic">F</text><path d="M1334.5 216.2h8" stroke="#1c2a58" stroke-width=".9"/><path d="M1325 234.15H1332.500" stroke="#555" stroke-width=".7" stroke-dasharray="1 1.200" fill="none"/><g fill="none" stroke="#1c3a80" stroke-width="1.300"><circle cx="1335.5" cy="231.65" r="2.500"/><circle cx="1340" cy="236.15" r="3"/><path d="M1334 234.15l4 3.500"/></g><path d="M1325 247.1H1332.500" stroke="#555" stroke-width=".7" stroke-dasharray="1 1.200" fill="none"/><circle cx="1335.5" cy="245.1" r="3.500" fill="#3a8ac8"/><circle cx="1340" cy="248.6" r="3.800" fill="#5aa8dc"/><path d="M1325 260.05H1332.500" stroke="#555" stroke-width=".7" stroke-dasharray="1 1.200" fill="none"/><rect x="1334.5" y="256.05" width="7" height="9" fill="#f0f0a0" stroke="#4a5a20" stroke-width=".8"/><path d="M1336 258.55h4M1336 260.55h4M1336 262.55h4" stroke="#4a5a20" stroke-width=".6"/><rect x="1336.5" y="255.05" width="3" height="1.500" fill="#4a5a20"/><path d="M1325 273H1332.500" stroke="#555" stroke-width=".7" stroke-dasharray="1 1.200" fill="none"/><path d="M1333 274q2-8 4 0t4 0" fill="none" stroke="#1c2a58" stroke-width="1.200"/><path d="M1339 274.5l2 3 1.500-3.500z" fill="#1c2a58"/><path d="M1325 285.95H1332.500" stroke="#555" stroke-width=".7" stroke-dasharray="1 1.200" fill="none"/><circle cx="1338" cy="285.95" r="4.300" fill="#cfe0f4" stroke="#3a68b0" stroke-width=".8"/><path d="M1338 280.45v11M1332.5 285.95h11" stroke="#2a4a90" stroke-width=".7"/><circle cx="1338" cy="285.95" r="1.500" fill="#2a4a90"/><path d="M1325 298.9H1332.500" stroke="#555" stroke-width=".7" stroke-dasharray="1 1.200" fill="none"/><text x="1332.5" y="302.9" font-size="14" fill="#1c2a58" font-family="Liberation Serif,serif" font-weight="bold" font-style="italic">α</text><path d="M1325 311.85H1332.500" stroke="#555" stroke-width=".7" stroke-dasharray="1 1.200" fill="none"/><path d="M1335.5 307.85v7h5" fill="none" stroke="#1c2a58" stroke-width="1.300"/><circle cx="1335.5" cy="307.85" r="1.600" fill="#1c2a58"/><circle cx="1341.5" cy="314.85" r="1.600" fill="#1c2a58"/><path d="M1325 324.8H1332.500" stroke="#555" stroke-width=".7" stroke-dasharray="1 1.200" fill="none"/><path d="M1334.5 321.8v6h4" fill="none" stroke="#1c2a58" stroke-width=".9"/><text x="1337" y="329.8" font-size="8" fill="#1c2a58" font-family="Liberation Serif,serif" font-style="italic">α</text><text x="1333" y="323.8" font-size="6" fill="#1c2a58" font-family="Liberation Serif,serif" font-style="italic">α</text><path d="M1325 337.75H1332.500" stroke="#555" stroke-width=".7" stroke-dasharray="1 1.200" fill="none"/><text x="1332" y="341.75" font-size="10.5" fill="#1c2a58" font-family="Liberation Sans,sans-serif" font-weight="bold" textLength="12" lengthAdjust="spacingAndGlyphs">AB</text><path d="M1325 350.7H1332.500" stroke="#555" stroke-width=".7" stroke-dasharray="1 1.200" fill="none"/><g transform="rotate(-40 1338 350.7)"><rect x="1335.5" y="348.8" width="8" height="3.800" fill="#2f68c0" stroke="#1c3a80" stroke-width=".4"/><path d="M1335.5 348.8l-3.500 1.900 3.500 1.900z" fill="#f0b060"/><rect x="1342" y="348.8" width="1.500" height="3.800" fill="#e07030"/></g><rect x="1321.300" y="347.5" width="6.400" height="6.400" fill="#fff" stroke="#8a8a8a" stroke-width=".7"/><path d="M1322.800 350.7h3.400" stroke="#333" stroke-width=".7"/><path d="M1339 363.65H1346" stroke="#555" stroke-width=".7" stroke-dasharray="1 1.200" fill="none"/><g transform="rotate(-40 1352 363.65)"><rect x="1349.5" y="361.75" width="8" height="3.800" fill="#2f68c0" stroke="#1c3a80" stroke-width=".4"/><path d="M1349.5 361.75l-3.500 1.900 3.500 1.900z" fill="#f0b060"/><rect x="1356" y="361.75" width="1.500" height="3.800" fill="#e07030"/></g><path d="M1325 376.6H1332.500" stroke="#555" stroke-width=".7" stroke-dasharray="1 1.200" fill="none"/><text x="1331.5" y="379.6" font-size="8.5" fill="#1c2a58" font-family="Liberation Sans,sans-serif" font-weight="bold">{..}</text><path d="M1325 389.55H1332.500" stroke="#555" stroke-width=".7" stroke-dasharray="1 1.200" fill="none"/><text x="1333" y="389.55" font-size="6.5" fill="#1c2a58" font-family="Liberation Sans,sans-serif" font-weight="bold">d</text><path d="M1334 393.55l8-8" stroke="#1c2a58" stroke-width=".8"/><text x="1337" y="394.55" font-size="6" fill="#1c2a58" font-family="Liberation Sans,sans-serif" font-weight="bold">dx</text><path d="M1325 402.5H1332.500" stroke="#555" stroke-width=".7" stroke-dasharray="1 1.200" fill="none"/><text x="1332" y="405" font-size="8.5" fill="#1c2a58" font-family="Liberation Serif,serif" font-weight="bold" font-style="italic">x,y</text><path d="M1325 415.45H1332.500" stroke="#555" stroke-width=".7" stroke-dasharray="1 1.200" fill="none"/><rect x="1333" y="410.95" width="10" height="9" fill="#3a78c8"/><path d="M1335 417.95v-5h2.500v5h2v-3" fill="none" stroke="#fff" stroke-width=".9"/><path d="M1325 428.4H1332.500" stroke="#555" stroke-width=".7" stroke-dasharray="1 1.200" fill="none"/><circle cx="1338" cy="428.4" r="4.500" fill="#3a80cc"/><text x="1335.7" y="430.9" font-size="7" fill="#fff" font-weight="bold" font-family="Liberation Sans,sans-serif">S</text><path d="M1325 441.35H1332.500" stroke="#555" stroke-width=".7" stroke-dasharray="1 1.200" fill="none"/><path d="M1333.5 436.85h3v4h6v4h-9z" fill="#1c2f70"/><rect x="1333.5" y="436.85" width="3" height="2.500" fill="#3a58a8"/><path d="M1325 454.3H1332.500" stroke="#555" stroke-width=".7" stroke-dasharray="1 1.200" fill="none"/><path d="M1333.5 449.8v9h9M1336 458.8v-4M1338.8 458.8v-6M1341.5 458.8v-3" fill="none" stroke="#2a4a90" stroke-width=".9"/><path d="M1325 467.25H1332.500" stroke="#555" stroke-width=".7" stroke-dasharray="1 1.200" fill="none"/><text x="1331" y="470.25" font-size="8" fill="#1c2a58" font-family="Liberation Sans,sans-serif" font-weight="bold" fill="#111">Φ·0</text><path d="M1325 480.2H1332.500" stroke="#555" stroke-width=".7" stroke-dasharray="1 1.200" fill="none"/><text x="1332.5" y="483.2" font-size="8.5" fill="#1c2a58" font-family="Liberation Serif,serif" font-weight="bold" font-style="italic">αβ</text><path d="M1325 493.15H1332.500" stroke="#555" stroke-width=".7" stroke-dasharray="1 1.200" fill="none"/><path d="M1333.5 488.65v9h10" fill="none" stroke="#2a4a90" stroke-width=".8"/><path d="M1334 496.15l2.500-6 2 4 2.500-5 1.500 2" fill="none" stroke="#1c2a58" stroke-width=".9"/><path d="M1325 506.1H1332.500" stroke="#555" stroke-width=".7" stroke-dasharray="1 1.200" fill="none"/><path d="M1338 501.3l4.56 2.16l-4.56 2.16l-4.56 -2.16z" fill="#4a68b8"/><path d="M1333.44 503.46l4.56 2.16v5.04l-4.56 -2.16z" fill="#16245a"/><path d="M1342.56 503.46l-4.56 2.16v5.04l4.56 -2.16z" fill="#0c1638"/><circle cx="1337" cy="506.6" r="1.300" fill="#9ac0f0"/><rect x="1321.300" y="502.9" width="6.400" height="6.400" fill="#fff" stroke="#8a8a8a" stroke-width=".7"/><path d="M1322.800 506.1h3.400" stroke="#333" stroke-width=".7"/><path d="M1339 519.05H1346" stroke="#555" stroke-width=".7" stroke-dasharray="1 1.200" fill="none"/><path d="M1352 514.25l4.56 2.16l-4.56 2.16l-4.56 -2.16z" fill="#4a68b8"/><path d="M1347.44 516.41l4.56 2.16v5.04l-4.56 -2.16z" fill="#16245a"/><path d="M1356.56 516.41l-4.56 2.16v5.04l4.56 -2.16z" fill="#0c1638"/><circle cx="1351" cy="519.55" r="1.300" fill="#9ac0f0"/><path d="M1339 532H1346" stroke="#555" stroke-width=".7" stroke-dasharray="1 1.200" fill="none"/><path d="M1352 527.2l4.56 2.16l-4.56 2.16l-4.56 -2.16z" fill="#4a68b8"/><path d="M1347.44 529.36l4.56 2.16v5.04l-4.56 -2.16z" fill="#16245a"/><path d="M1356.56 529.36l-4.56 2.16v5.04l4.56 -2.16z" fill="#0c1638"/><circle cx="1351" cy="532.5" r="1.300" fill="#9ac0f0"/><path d="M1325 544.95H1332.500" stroke="#555" stroke-width=".7" stroke-dasharray="1 1.200" fill="none"/><path d="M1335 541.95l3 3.500 3-4.500-1.500 5 2 4-3.500-2.500-3.500 3 1.500-4.500z" fill="#2a2a38"/><path d="M1337 543.95l2.500 2.500-2 3z" fill="#e8822a"/><path d="M1333 541.95h4M1335 539.95v4" stroke="#2a4ac0" stroke-width=".8"/><path d="M1340 540.95l3-1-1 3z" fill="#d42a3a"/><path d="M1325 557.9H1332.500" stroke="#555" stroke-width=".7" stroke-dasharray="1 1.200" fill="none"/><path d="M1335 554.9l3 3.500 3-4.500-1.500 5 2 4-3.500-2.500-3.500 3 1.500-4.500z" fill="#2a2a38"/><path d="M1337 556.9l2.500 2.500-2 3z" fill="#e8822a"/><path d="M1333 554.9h4M1335 552.9v4" stroke="#d42a3a" stroke-width=".8"/><path d="M1340 553.9l3-1-1 3z" fill="#d42a3a"/><path d="M1325 570.85H1332.500" stroke="#555" stroke-width=".7" stroke-dasharray="1 1.200" fill="none"/><path d="M1335 567.85l3 3.500 3-4.500-1.500 5 2 4-3.500-2.500-3.500 3 1.500-4.500z" fill="#c42a3a"/><path d="M1337 569.85l2.500 2.500-2 3z" fill="#2a2a38"/><path d="M1333 567.85h4M1335 565.85v4" stroke="#2a4ac0" stroke-width=".8"/><path d="M1340 566.85l3-1-1 3z" fill="#d42a3a"/><path d="M1325 583.8H1332.500" stroke="#555" stroke-width=".7" stroke-dasharray="1 1.200" fill="none"/><path d="M1335 580.8l3 3.500 3-4.500-1.500 5 2 4-3.500-2.500-3.500 3 1.500-4.500z" fill="#c42a3a"/><path d="M1337 582.8l2.500 2.500-2 3z" fill="#2a2a38"/><path d="M1333 580.8h4M1335 578.8v4" stroke="#d42a3a" stroke-width=".8"/><path d="M1340 579.8l3-1-1 3z" fill="#d42a3a"/><path d="M1325 596.75H1332.500" stroke="#555" stroke-width=".7" stroke-dasharray="1 1.200" fill="none"/><rect x="1333.5" y="592.25" width="9" height="9" fill="#3a78c8"/><path d="M1333.5 595.25h9M1333.5 598.25h9M1336.5 592.25v9M1339.5 592.25v9" stroke="#a8ccf0" stroke-width=".5" stroke-dasharray="1 1"/><path d="M1325 609.7H1332.500" stroke="#555" stroke-width=".7" stroke-dasharray="1 1.200" fill="none"/><circle cx="1334" cy="608.7" r="1.700" fill="#5ab0e8"/><circle cx="1337" cy="607.2" r="1.700" fill="#5ab0e8"/><circle cx="1340" cy="607.7" r="1.700" fill="#5ab0e8"/><circle cx="1335.5" cy="611.2" r="1.700" fill="#5ab0e8"/><circle cx="1338.5" cy="610.2" r="1.700" fill="#5ab0e8"/><circle cx="1341.5" cy="610.7" r="1.700" fill="#5ab0e8"/><circle cx="1338" cy="613.2" r="1.700" fill="#5ab0e8"/><circle cx="1341" cy="613.2" r="1.700" fill="#5ab0e8"/><path d="M1325 622.65H1332.500" stroke="#555" stroke-width=".7" stroke-dasharray="1 1.200" fill="none"/><path d="M1338 617.85l4.56 2.16l-4.56 2.16l-4.56 -2.16z" fill="#f0c840"/><path d="M1333.44 620.01l4.56 2.16v5.04l-4.56 -2.16z" fill="#c89020"/><path d="M1342.56 620.01l-4.56 2.16v5.04l4.56 -2.16z" fill="#8a6010"/><path d="M1325 635.6H1332.500" stroke="#555" stroke-width=".7" stroke-dasharray="1 1.200" fill="none"/><path d="M1333.5 631.1v9M1334 638.6l1.500-7 2 8 1.500-6 1.500 5 1.500-4" fill="none" stroke="#2a9a4a" stroke-width=".8"/><circle cx="1336" cy="632.1" r="1.100" fill="#2a4ac0"/><circle cx="1340.5" cy="632.6" r="1.100" fill="#2a4ac0"/><path d="M1325 648.55H1332.500" stroke="#555" stroke-width=".7" stroke-dasharray="1 1.200" fill="none"/><path d="M1333.5 644.05v9M1334 651.55l1.500-7 2 8 1.500-6 1.500 5 1.500-4" fill="none" stroke="#2a9a4a" stroke-width=".8"/><circle cx="1336" cy="645.05" r="1.100" fill="#d42a3a"/><circle cx="1340.5" cy="645.55" r="1.100" fill="#d42a3a"/><path d="M1338.500 174.4V195.3" stroke="#555" stroke-width=".7" stroke-dasharray="1 1.200" fill="none"/><path d="M1338.500 355.7V363.65" stroke="#555" stroke-width=".7" stroke-dasharray="1 1.200" fill="none"/><path d="M1338.500 511.1V532" stroke="#555" stroke-width=".7" stroke-dasharray="1 1.200" fill="none"/></svg>
<div class="abs" style="left:135.600px;top:737px;width:1341.400px;height:14.500px;background:#fff;border-bottom:1px solid #9a9a9a"></div>
<div class="abs" style="left:135.600px;top:736px;width:1176px;height:1.200px;background:#444"></div>
<div class="abs" style="left:1312px;top:736.500px;width:165px;height:1px;background:#999"></div>
<div class="abs" style="left:958px;top:739px;width:1px;height:10.500px;background:#c4c4c4"></div>
<div class="abs" style="left:1079px;top:739px;width:1px;height:10.500px;background:#c4c4c4"></div>
<div class="abs" style="left:1146px;top:739px;width:1px;height:10.500px;background:#c4c4c4"></div>
<div class="abs" style="left:1166px;top:739px;width:1px;height:10.500px;background:#c4c4c4"></div>
<div class="abs" style="left:1192px;top:739px;width:1px;height:10.500px;background:#c4c4c4"></div>
<div class="abs" style="left:1303px;top:739px;width:1px;height:10.500px;background:#c4c4c4"></div>
<div class="abs" style="left:1328px;top:739px;width:1px;height:10.500px;background:#c4c4c4"></div>
<div class="sb" style="left:139.5px">Select &lt;1&gt; Entity : Subsystem edit mode.</div>
<div class="sb" style="left:1150px">Car</div>
<div class="sb" style="left:1169px">Global</div>
<div class="sb" style="left:1196.5px">X:2500 Y:-600 Z:0</div>
<div class="sb" style="left:1308px">Local</div>
<div class="sb" style="left:1331.5px">X:2500 Y:-600</div>
<div class="sb" style="left:1424.5px">N/kg/mm/s</div>
</div></body></html>
